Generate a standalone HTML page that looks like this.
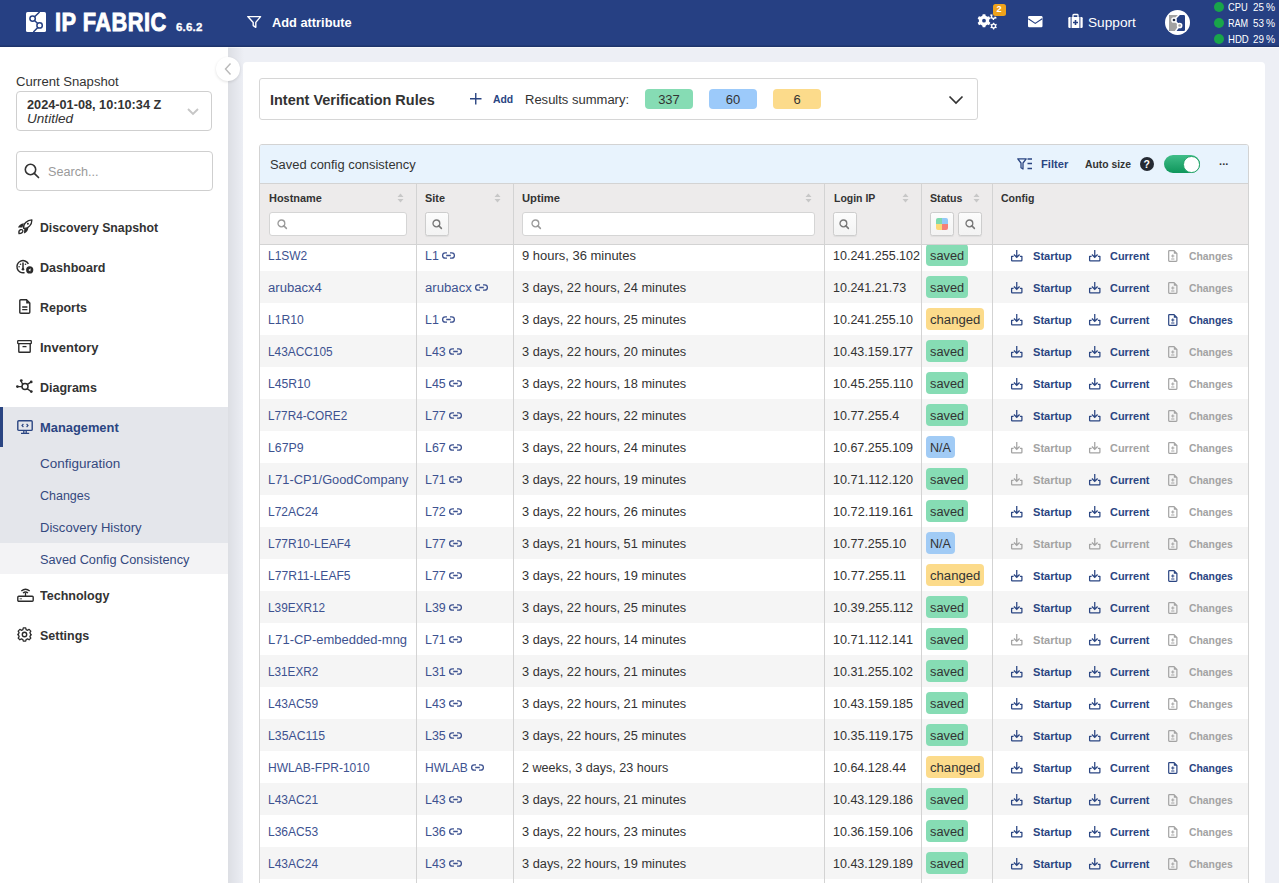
<!DOCTYPE html>
<html><head><meta charset="utf-8"><title>IP Fabric</title>
<style>
html,body{margin:0;padding:0;width:1279px;height:883px;overflow:hidden;background:#edeff5;font-family:"Liberation Sans", sans-serif}
.t{position:absolute;white-space:nowrap;font-family:"Liberation Sans", sans-serif;transform-origin:0 0}
.badge{position:absolute;border-radius:4px;font-family:"Liberation Sans", sans-serif;white-space:nowrap}
svg{overflow:visible}
</style></head><body>
<div style="position:absolute;left:0px;top:0px;width:1279px;height:883px;background:#edeff5"></div>
<div style="position:absolute;left:0px;top:47px;width:228px;height:836px;background:#fff"></div>
<div style="position:absolute;left:228px;top:47px;width:16px;height:836px;background:linear-gradient(90deg,rgba(0,0,0,0.07),rgba(0,0,0,0))"></div>
<div style="position:absolute;left:243px;top:62px;width:1022px;height:830px;background:#fff;border-radius:4px"></div>
<div style="position:absolute;left:0px;top:0px;width:1279px;height:47px;background:linear-gradient(180deg,#264083 0px,#264083 44.5px,#1c3166 47px)"></div>
<div style="position:absolute;left:228px;top:47px;width:1051px;height:1px;background:rgba(255,255,255,0.5)"></div>
<svg style="position:absolute;left:26px;top:12px;" width="20" height="20" viewBox="0 0 20 20"><rect x="0" y="0" width="20" height="20" rx="1.6" fill="#fff"/><g fill="none" stroke="#264083" stroke-width="1.5"><circle cx="6.6" cy="6.6" r="2.7"/><circle cx="13.6" cy="13.4" r="2.7"/><path d="M13.6 0 L8.6 4.8 M8.5 8.5 L11.7 11.5 M11.8 15.4 L7.4 20"/></g></svg>
<div class="t" style="left:54.8px;top:8.88px;font-size:26.6px;line-height:26.6px;color:#fff;font-weight:700;font-style:normal;transform:scaleX(0.82);transform-origin:0 0;letter-spacing:0.6px;-webkit-text-stroke:0.9px #fff">IP FABRIC</div>
<div class="t" style="left:176px;top:22.27px;font-size:11.5px;line-height:11.5px;color:#fff;font-weight:700;font-style:normal;letter-spacing:0.2px;-webkit-text-stroke:0.3px #fff">6.6.2</div>
<svg style="position:absolute;left:247px;top:15px;" width="15" height="13" viewBox="0 0 15 13"><path d="M0.8 1.6 H13.6 L8.8 7.4 V12.3 L6.2 10.6 V7.4 Z" fill="none" stroke="#fff" stroke-width="1.4" stroke-linejoin="round"/></svg>
<div class="t" style="left:272px;top:15.98px;font-size:13.02px;line-height:13.02px;color:#fff;font-weight:700;font-style:normal;transform:scaleX(0.9844);">Add attribute</div>
<svg style="position:absolute;left:972px;top:2px;" width="40" height="32" viewBox="0 0 40 32"><path d="M10.34 13.77 L10.68 12.13 L13.32 12.13 L13.66 13.77 L15.44 14.80 L17.03 14.27 L18.35 16.56 L17.10 17.67 L17.10 19.73 L18.35 20.84 L17.03 23.13 L15.44 22.60 L13.66 23.63 L13.32 25.27 L10.68 25.27 L10.34 23.63 L8.56 22.60 L6.97 23.13 L5.65 20.84 L6.90 19.73 L6.90 17.67 L5.65 16.56 L6.97 14.27 L8.56 14.80 Z M13.90 18.70 A1.9 1.9 0 1 0 10.10 18.70 A1.9 1.9 0 1 0 13.90 18.70 Z" fill="#fff" fill-rule="evenodd"/><path d="M20.84 21.61 L21.00 20.65 L22.20 20.65 L22.36 21.61 L23.37 22.20 L24.29 21.85 L24.89 22.90 L24.13 23.52 L24.13 24.68 L24.89 25.30 L24.29 26.35 L23.37 26.00 L22.36 26.59 L22.20 27.55 L21.00 27.55 L20.84 26.59 L19.83 26.00 L18.91 26.35 L18.31 25.30 L19.07 24.68 L19.07 23.52 L18.31 22.90 L18.91 21.85 L19.83 22.20 Z M22.85 24.10 A1.25 1.25 0 1 0 20.35 24.10 A1.25 1.25 0 1 0 22.85 24.10 Z" fill="#fff" fill-rule="evenodd"/><path d="M20.64 12.01 L20.80 11.05 L22.00 11.05 L22.16 12.01 L23.17 12.60 L24.09 12.25 L24.69 13.30 L23.93 13.92 L23.93 15.08 L24.69 15.70 L24.09 16.75 L23.17 16.40 L22.16 16.99 L22.00 17.95 L20.80 17.95 L20.64 16.99 L19.63 16.40 L18.71 16.75 L18.11 15.70 L18.87 15.08 L18.87 13.92 L18.11 13.30 L18.71 12.25 L19.63 12.60 Z M22.65 14.50 A1.25 1.25 0 1 0 20.15 14.50 A1.25 1.25 0 1 0 22.65 14.50 Z" fill="#fff" fill-rule="evenodd"/></svg>
<div style="position:absolute;left:993px;top:4px;width:13px;height:12px;background:#eda21b;border-radius:2.5px;box-shadow:0 0 0 0.8px #264083"></div>
<div class="t" style="left:996.6px;top:5.41px;font-size:9.2px;line-height:9.2px;color:#fff;font-weight:700;font-style:normal;">2</div>
<svg style="position:absolute;left:1027.7px;top:16px;" width="15" height="12" viewBox="0 0 15 12"><rect x="0" y="0" width="14.5" height="11.3" rx="1.2" fill="#fff"/><path d="M0.3 2.8 L7.25 7.4 L14.2 2.8" fill="none" stroke="#264083" stroke-width="1.1"/></svg>
<svg style="position:absolute;left:1068px;top:14px;" width="15" height="14" viewBox="0 0 15 14"><path d="M5 3 V1.3 Q5 0.5 5.8 0.5 H9.2 Q10 0.5 10 1.3 V3" fill="none" stroke="#fff" stroke-width="1.3"/><rect x="0.3" y="3" width="14.4" height="11" rx="1.2" fill="#fff"/><rect x="2.6" y="3" width="1" height="11" fill="#264083"/><rect x="11.4" y="3" width="1" height="11" fill="#264083"/><path d="M7.5 6 V11 M5 8.5 H10" stroke="#264083" stroke-width="1.6"/></svg>
<div class="t" style="left:1088px;top:15.98px;font-size:13.02px;line-height:13.02px;color:#fff;font-weight:400;font-style:normal;transform:scaleX(1.0487);">Support</div>
<svg style="position:absolute;left:1165px;top:10px;" width="25" height="25" viewBox="0 0 25 25"><circle cx="12.5" cy="12.5" r="12.5" fill="#fff"/><rect x="4" y="5" width="16" height="16" rx="1.2" fill="#264083"/><path d="M4 6.2 Q4 5 5.2 5 H13.6 L9 10 L14.6 15.5 L10.6 21 H5.2 Q4 21 4 19.8 Z" fill="#a2a2a2"/><path d="M14.6 4.2 L9 10 L14.6 15.5 L10.2 21.6" fill="none" stroke="#fff" stroke-width="1.5"/><circle cx="9" cy="10" r="2.1" fill="#222d45" stroke="#fff" stroke-width="1.5"/><circle cx="14.6" cy="15.5" r="2.1" fill="#a2a2a2" stroke="#fff" stroke-width="1.5"/></svg>
<div style="position:absolute;left:1214px;top:2px;width:10px;height:10px;background:#19a54a;border-radius:50%"></div>
<div class="t" style="left:1228px;top:3.34px;font-size:10.23px;line-height:10.23px;color:#fff;font-weight:400;font-style:normal;transform:scaleX(0.9088);">CPU</div>
<div class="t" style="left:1253px;top:3.34px;font-size:10.23px;line-height:10.23px;color:#fff;font-weight:400;font-style:normal;transform:scaleX(0.9615);">25</div>
<div class="t" style="left:1266px;top:3.34px;font-size:10.23px;line-height:10.23px;color:#fff;font-weight:400;font-style:normal;transform:scaleX(0.9983);">%</div>
<div style="position:absolute;left:1214px;top:18px;width:10px;height:10px;background:#19a54a;border-radius:50%"></div>
<div class="t" style="left:1228px;top:19.34px;font-size:10.23px;line-height:10.23px;color:#fff;font-weight:400;font-style:normal;transform:scaleX(0.8893);">RAM</div>
<div class="t" style="left:1253px;top:19.34px;font-size:10.23px;line-height:10.23px;color:#fff;font-weight:400;font-style:normal;transform:scaleX(0.9615);">53</div>
<div class="t" style="left:1266px;top:19.34px;font-size:10.23px;line-height:10.23px;color:#fff;font-weight:400;font-style:normal;transform:scaleX(0.9983);">%</div>
<div style="position:absolute;left:1214px;top:34px;width:10px;height:10px;background:#19a54a;border-radius:50%"></div>
<div class="t" style="left:1228px;top:35.34px;font-size:10.23px;line-height:10.23px;color:#fff;font-weight:400;font-style:normal;transform:scaleX(0.9351);">HDD</div>
<div class="t" style="left:1253px;top:35.34px;font-size:10.23px;line-height:10.23px;color:#fff;font-weight:400;font-style:normal;transform:scaleX(0.9615);">29</div>
<div class="t" style="left:1266px;top:35.34px;font-size:10.23px;line-height:10.23px;color:#fff;font-weight:400;font-style:normal;transform:scaleX(0.9983);">%</div>
<div class="t" style="left:16px;top:74.98px;font-size:13.02px;line-height:13.02px;color:#333333;font-weight:400;font-style:normal;transform:scaleX(1.0064);">Current Snapshot</div>
<div style="position:absolute;left:16px;top:91px;width:196px;height:40px;box-sizing:border-box;border:1px solid #cfcfcf;border-radius:4px;background:#fff"></div>
<div class="t" style="left:27px;top:97.98px;font-size:13.02px;line-height:13.02px;color:#333333;font-weight:700;font-style:normal;transform:scaleX(0.9767);">2024-01-08, 10:10:34 Z</div>
<div class="t" style="left:27px;top:111.98px;font-size:13.02px;line-height:13.02px;color:#333333;font-weight:400;font-style:italic;transform:scaleX(1.0432);">Untitled</div>
<svg style="position:absolute;left:187px;top:108px;" width="12" height="7" viewBox="0 0 12 7"><path d="M1 1 L6 6 L11 1" fill="none" stroke="#c6c6c6" stroke-width="1.9"/></svg>
<div style="position:absolute;left:16px;top:151px;width:197px;height:40px;box-sizing:border-box;border:1px solid #cfcfcf;border-radius:4px;background:#fff"></div>
<svg style="position:absolute;left:24px;top:163px;" width="16" height="16" viewBox="0 0 16 16"><circle cx="6.5" cy="6.5" r="5.2" fill="none" stroke="#333333" stroke-width="1.6"/><path d="M10.3 10.3 L14.5 14.5" stroke="#333333" stroke-width="1.7" stroke-linecap="round"/></svg>
<div class="t" style="left:47.5px;top:164.98px;font-size:13.02px;line-height:13.02px;color:#9a9a9a;font-weight:400;font-style:normal;transform:scaleX(0.9688);">Search...</div>
<div style="position:absolute;left:0px;top:407px;width:228px;height:136px;background:#e4e6eb"></div>
<div style="position:absolute;left:0px;top:407px;width:3px;height:40px;background:#2a4582"></div>
<div style="position:absolute;left:0px;top:543px;width:228px;height:31px;background:#f3f3f5"></div>
<div class="t" style="left:40.3px;top:220.98px;font-size:13.02px;line-height:13.02px;color:#333333;font-weight:700;font-style:normal;transform:scaleX(0.9439);">Discovery Snapshot</div>
<div class="t" style="left:40.3px;top:260.98px;font-size:13.02px;line-height:13.02px;color:#333333;font-weight:700;font-style:normal;transform:scaleX(0.9623);">Dashboard</div>
<div class="t" style="left:40.3px;top:300.98px;font-size:13.02px;line-height:13.02px;color:#333333;font-weight:700;font-style:normal;transform:scaleX(0.9555);">Reports</div>
<div class="t" style="left:40.3px;top:340.98px;font-size:13.02px;line-height:13.02px;color:#333333;font-weight:700;font-style:normal;transform:scaleX(0.9979);">Inventory</div>
<div class="t" style="left:40.3px;top:380.98px;font-size:13.02px;line-height:13.02px;color:#333333;font-weight:700;font-style:normal;transform:scaleX(0.9581);">Diagrams</div>
<div class="t" style="left:40.3px;top:420.98px;font-size:13.02px;line-height:13.02px;color:#2a4582;font-weight:700;font-style:normal;transform:scaleX(0.9888);">Management</div>
<div class="t" style="left:40.3px;top:588.98px;font-size:13.02px;line-height:13.02px;color:#333333;font-weight:700;font-style:normal;transform:scaleX(0.9627);">Technology</div>
<div class="t" style="left:40.3px;top:628.98px;font-size:13.02px;line-height:13.02px;color:#333333;font-weight:700;font-style:normal;transform:scaleX(0.9589);">Settings</div>
<div class="t" style="left:39.8px;top:457.28px;font-size:13.02px;line-height:13.02px;color:#34497f;font-weight:400;font-style:normal;transform:scaleX(1.0367);">Configuration</div>
<div class="t" style="left:39.8px;top:489.28px;font-size:13.02px;line-height:13.02px;color:#34497f;font-weight:400;font-style:normal;transform:scaleX(0.9595);">Changes</div>
<div class="t" style="left:39.8px;top:521.28px;font-size:13.02px;line-height:13.02px;color:#34497f;font-weight:400;font-style:normal;transform:scaleX(1.0031);">Discovery History</div>
<div class="t" style="left:39.8px;top:553.28px;font-size:13.02px;line-height:13.02px;color:#34497f;font-weight:400;font-style:normal;transform:scaleX(0.9790);">Saved Config Consistency</div>
<svg style="position:absolute;left:17px;top:219px;" width="16" height="16" viewBox="0 0 16 16"><path d="M1 8.6 Q2.2 4.9 6.9 4.2 L5.4 8.6 Z" fill="#2b2b2b"/><path d="M7 14.6 L7.3 9.6 L11.4 7.9 Q11.4 12.8 7 14.6 Z" fill="#2b2b2b"/><path d="M6.6 9.4 C5.8 4.8 10.2 1.2 14.9 0.9 C14.9 5.6 11.3 10 6.6 9.4 Z" fill="#fff" stroke="#2b2b2b" stroke-width="1.3" stroke-linejoin="round"/><circle cx="10.9" cy="4.7" r="1" fill="#2b2b2b"/><path d="M2 14.6 Q1.3 11.5 3.6 10.6 Q5.6 10.2 5.9 12 Q5.9 14.3 2 14.6 Z" fill="none" stroke="#2b2b2b" stroke-width="1.3"/></svg>
<svg style="position:absolute;left:16px;top:259px;" width="18" height="16" viewBox="0 0 18 16"><path d="M12.4 4.8 A6.1 6.1 0 1 0 8.6 13.6" fill="none" stroke="#2b2b2b" stroke-width="1.5"/><path d="M7 3.6 V10" stroke="#2b2b2b" stroke-width="1.5"/><circle cx="7" cy="10.3" r="1.3" fill="#2b2b2b"/><circle cx="4.5" cy="5.2" r="0.8" fill="#2b2b2b"/><circle cx="9.5" cy="5.2" r="0.8" fill="#2b2b2b"/><circle cx="3.1" cy="7.7" r="0.8" fill="#2b2b2b"/><circle cx="13.7" cy="10.9" r="3.6" fill="#2b2b2b"/><path d="M12.4 10.9 L14.8 9.3 L14.3 12.4 Z" fill="#fff"/></svg>
<svg style="position:absolute;left:19px;top:299px;" width="12" height="15" viewBox="0 0 12 15"><path d="M1.8 0.8 H7.5 L10.8 4.1 V13.2 Q10.8 14.2 9.8 14.2 H1.8 Q0.8 14.2 0.8 13.2 V1.8 Q0.8 0.8 1.8 0.8 Z" fill="none" stroke="#2b2b2b" stroke-width="1.4"/><path d="M7.2 0.8 L10.8 4.4 L7.2 4.4 Z" fill="#2b2b2b"/><path d="M3.2 8 H8.4 M3.2 10.6 H8.4" stroke="#2b2b2b" stroke-width="1.3"/></svg>
<svg style="position:absolute;left:17px;top:340px;" width="15" height="13" viewBox="0 0 15 13"><rect x="0.7" y="0.7" width="13.6" height="3" rx="0.6" fill="none" stroke="#2b2b2b" stroke-width="1.3"/><path d="M1.8 3.7 V11.5 Q1.8 12.3 2.6 12.3 H12.4 Q13.2 12.3 13.2 11.5 V3.7" fill="none" stroke="#2b2b2b" stroke-width="1.4"/><path d="M5.5 6.6 H9.5" stroke="#2b2b2b" stroke-width="1.3"/></svg>
<svg style="position:absolute;left:16px;top:379px;" width="18" height="15" viewBox="0 0 18 15"><circle cx="9" cy="7.6" r="3" fill="none" stroke="#2b2b2b" stroke-width="1.5"/><path d="M1 7.6 H6 M6.8 5.5 L5 2 M11 5.6 L14.5 3.3 M11 9.6 L14.5 12" stroke="#2b2b2b" stroke-width="1.4"/><circle cx="1.4" cy="7.6" r="1.4" fill="#2b2b2b"/><circle cx="5.3" cy="1.6" r="1.4" fill="#2b2b2b"/><circle cx="15.2" cy="2.9" r="1.4" fill="#2b2b2b"/><circle cx="15.3" cy="12.6" r="1.4" fill="#2b2b2b"/></svg>
<svg style="position:absolute;left:17px;top:420px;" width="16" height="14" viewBox="0 0 16 14"><rect x="0.8" y="0.8" width="14.4" height="9.6" rx="1" fill="none" stroke="#2a4582" stroke-width="1.4"/><path d="M4 13.3 H12.2 M6.8 10.4 V13.3 M9.2 10.4 V13.3" stroke="#2a4582" stroke-width="1.3"/><path d="M6.4 4 L5 5.5 L6.4 7 M9.6 4 L11 5.5 L9.6 7" fill="none" stroke="#2a4582" stroke-width="1.1"/></svg>
<svg style="position:absolute;left:17px;top:588px;" width="17" height="14" viewBox="0 0 17 14"><rect x="0.8" y="8.3" width="15.4" height="5" rx="1" fill="none" stroke="#2b2b2b" stroke-width="1.4"/><path d="M8.5 5 V8.3" stroke="#2b2b2b" stroke-width="1.3"/><path d="M4.3 3 Q8.5 -0.5 12.7 3 M6 5 Q8.5 3 11 5" fill="none" stroke="#2b2b2b" stroke-width="1.3"/><path d="M2.6 10.8 H5" stroke="#2b2b2b" stroke-width="0.8"/></svg>
<svg style="position:absolute;left:17px;top:627px;" width="15" height="15" viewBox="0 0 15 15"><path d="M6.3 0.9 H8.7 L9.1 2.6 L10.6 3.3 L12.1 2.4 L13.8 4.1 L12.9 5.6 L13.5 7.1 L14.2 7.5 V8 L13.5 8.4 L12.9 9.6 L13.8 11.1 L12.1 12.8 L10.6 11.9 L9.1 12.6 L8.7 14.2 H6.3 L5.9 12.6 L4.4 11.9 L2.9 12.8 L1.2 11.1 L2.1 9.6 L1.5 8.1 L0.8 7.6 V7.3 L1.5 6.9 L2.1 5.6 L1.2 4.1 L2.9 2.4 L4.4 3.3 L5.9 2.6 Z" fill="none" stroke="#2b2b2b" stroke-width="1.3" stroke-linejoin="round"/><circle cx="7.5" cy="7.5" r="2.2" fill="none" stroke="#2b2b2b" stroke-width="1.4"/></svg>
<div style="position:absolute;left:216px;top:57px;width:24px;height:24px;border-radius:50%;background:#fff;box-shadow:0 1px 3px rgba(0,0,0,0.12)"></div>
<svg style="position:absolute;left:223px;top:62px;" width="10" height="14" viewBox="0 0 10 14"><path d="M7.5 1.5 L2.5 7 L7.5 12.5" fill="none" stroke="#b9b9b9" stroke-width="1.4"/></svg>
<div style="position:absolute;left:259px;top:78px;width:719px;height:42px;box-sizing:border-box;border:1px solid #d6d6d6;border-radius:3px;background:#fff"></div>
<div class="t" style="left:270px;top:93.40px;font-size:14.88px;line-height:14.88px;color:#333333;font-weight:700;font-style:normal;transform:scaleX(0.9722);">Intent Verification Rules</div>
<svg style="position:absolute;left:470px;top:93px;" width="12" height="12" viewBox="0 0 12 12"><path d="M5.75 0 V11.5 M0 5.75 H11.5" stroke="#2a4582" stroke-width="1.4"/></svg>
<div class="t" style="left:492.5px;top:93.75px;font-size:11.16px;line-height:11.16px;color:#2a4582;font-weight:700;font-style:normal;transform:scaleX(0.9330);">Add</div>
<div class="t" style="left:525px;top:92.88px;font-size:13.02px;line-height:13.02px;color:#333333;font-weight:400;font-style:normal;transform:scaleX(0.9992);">Results summary:</div>
<div class="badge" style="left:645px;top:89px;width:48px;height:20px;background:#86dcb4;line-height:21.5px;font-size:13px;text-align:center;color:#333333">337</div>
<div class="badge" style="left:709px;top:89px;width:48px;height:20px;background:#9ccafa;line-height:21.5px;font-size:13px;text-align:center;color:#333333">60</div>
<div class="badge" style="left:773px;top:89px;width:48px;height:20px;background:#fcdb8b;line-height:21.5px;font-size:13px;text-align:center;color:#333333">6</div>
<svg style="position:absolute;left:948px;top:95px;" width="16" height="10" viewBox="0 0 16 10"><path d="M1.5 1.5 L8 8 L14.5 1.5" fill="none" stroke="#333333" stroke-width="1.7"/></svg>
<div style="position:absolute;left:259px;top:144px;width:990px;height:760px;box-sizing:border-box;border:1px solid #d3d3d3;border-radius:3px 3px 0 0;background:#fff"></div>
<div style="position:absolute;left:260px;top:145px;width:988px;height:38px;background:#e8f3fd;border-radius:2px 2px 0 0"></div>
<div style="position:absolute;left:260px;top:183px;width:988px;height:1px;background:#d3d3d3"></div>
<div class="t" style="left:270px;top:157.78px;font-size:13.02px;line-height:13.02px;color:#333333;font-weight:400;font-style:normal;transform:scaleX(0.9916);">Saved config consistency</div>
<svg style="position:absolute;left:1017px;top:158px;" width="16" height="12" viewBox="0 0 16 12"><path d="M0.8 0.8 H9.2 L6 5 V11 L4 9.8 V5 Z" fill="none" stroke="#2a4582" stroke-width="1.3" stroke-linejoin="round"/><path d="M10.5 1 H15 M10.5 5.5 H15 M10.5 10.5 H15" stroke="#2a4582" stroke-width="1.3"/></svg>
<div class="t" style="left:1041.4px;top:158.55px;font-size:11.16px;line-height:11.16px;color:#2a4582;font-weight:700;font-style:normal;transform:scaleX(0.9977);">Filter</div>
<div class="t" style="left:1084.6px;top:158.55px;font-size:11.16px;line-height:11.16px;color:#333333;font-weight:700;font-style:normal;transform:scaleX(0.9285);">Auto size</div>
<div style="position:absolute;left:1140px;top:157px;width:14px;height:14px;background:#252a33;border-radius:50%"></div>
<div class="t" style="left:1143.6px;top:159.11px;font-size:10.5px;line-height:10.5px;color:#fff;font-weight:700;font-style:normal;">?</div>
<div style="position:absolute;left:1164px;top:155px;width:36px;height:18px;background:linear-gradient(180deg,#40bd88,#0f965b);border-radius:9px"></div>
<div style="position:absolute;left:1183px;top:156px;width:16.5px;height:16.5px;box-sizing:border-box;border:1px solid #23a468;background:#fff;border-radius:50%"></div>
<div class="t" style="left:1219px;top:158.69px;font-size:11px;line-height:11px;color:#333333;font-weight:700;font-style:normal;letter-spacing:-0.5px">&middot;&middot;&middot;</div>
<div style="position:absolute;left:260px;top:184px;width:988px;height:60px;background:#edebeb"></div>
<div style="position:absolute;left:260px;top:244px;width:988px;height:1px;background:#d3d3d3"></div>
<div class="t" style="left:268.6px;top:192.85px;font-size:11.16px;line-height:11.16px;color:#333;font-weight:700;font-style:normal;transform:scaleX(0.9806);">Hostname</div>
<svg style="position:absolute;left:397px;top:193px;" width="7" height="10" viewBox="0 0 7 10"><path d="M3.5 0.5 L6.5 4 H0.5 Z M3.5 9.5 L6.5 6 H0.5 Z" fill="#c7c7c7"/></svg>
<div class="t" style="left:425.1px;top:192.85px;font-size:11.16px;line-height:11.16px;color:#333;font-weight:700;font-style:normal;transform:scaleX(0.9733);">Site</div>
<svg style="position:absolute;left:494px;top:193px;" width="7" height="10" viewBox="0 0 7 10"><path d="M3.5 0.5 L6.5 4 H0.5 Z M3.5 9.5 L6.5 6 H0.5 Z" fill="#c7c7c7"/></svg>
<div class="t" style="left:521.9px;top:192.85px;font-size:11.16px;line-height:11.16px;color:#333;font-weight:700;font-style:normal;transform:scaleX(1.0062);">Uptime</div>
<svg style="position:absolute;left:805px;top:193px;" width="7" height="10" viewBox="0 0 7 10"><path d="M3.5 0.5 L6.5 4 H0.5 Z M3.5 9.5 L6.5 6 H0.5 Z" fill="#c7c7c7"/></svg>
<div class="t" style="left:833.5px;top:192.85px;font-size:11.16px;line-height:11.16px;color:#333;font-weight:700;font-style:normal;transform:scaleX(0.9396);">Login IP</div>
<svg style="position:absolute;left:902px;top:193px;" width="7" height="10" viewBox="0 0 7 10"><path d="M3.5 0.5 L6.5 4 H0.5 Z M3.5 9.5 L6.5 6 H0.5 Z" fill="#c7c7c7"/></svg>
<div class="t" style="left:930.2px;top:192.85px;font-size:11.16px;line-height:11.16px;color:#333;font-weight:700;font-style:normal;transform:scaleX(0.9528);">Status</div>
<svg style="position:absolute;left:973px;top:193px;" width="7" height="10" viewBox="0 0 7 10"><path d="M3.5 0.5 L6.5 4 H0.5 Z M3.5 9.5 L6.5 6 H0.5 Z" fill="#c7c7c7"/></svg>
<div class="t" style="left:1001.0px;top:192.85px;font-size:11.16px;line-height:11.16px;color:#333;font-weight:700;font-style:normal;transform:scaleX(0.9460);">Config</div>
<div style="position:absolute;left:416.0px;top:184px;width:1px;height:720px;background:#d3d3d3"></div>
<div style="position:absolute;left:512.8px;top:184px;width:1px;height:720px;background:#d3d3d3"></div>
<div style="position:absolute;left:824.4px;top:184px;width:1px;height:720px;background:#d3d3d3"></div>
<div style="position:absolute;left:921.1px;top:184px;width:1px;height:720px;background:#d3d3d3"></div>
<div style="position:absolute;left:991.9px;top:184px;width:1px;height:720px;background:#d3d3d3"></div>
<div style="position:absolute;left:268.6px;top:212px;width:138.5px;height:23.5px;box-sizing:border-box;border:1px solid #d5d5d5;border-radius:3px;background:#fff"></div>
<svg style="position:absolute;left:277.1px;top:218.5px;" width="11" height="11" viewBox="0 0 11 11"><circle cx="4.4" cy="4.4" r="3.4" fill="none" stroke="#9a9a9a" stroke-width="1.3"/><path d="M6.9 6.9 L9.4 9.4" stroke="#9a9a9a" stroke-width="1.5" stroke-linecap="round"/></svg>
<div style="position:absolute;left:425.3px;top:212px;width:23.5px;height:23.5px;box-sizing:border-box;border:1px solid #cdcdcd;border-radius:2.5px;background:linear-gradient(180deg,#fcfcfc,#f3f3f3);box-shadow:0 1px 1px rgba(0,0,0,0.06)"></div>
<svg style="position:absolute;left:431.5px;top:218.5px;" width="11" height="11" viewBox="0 0 11 11"><circle cx="4.4" cy="4.4" r="3.4" fill="none" stroke="#777" stroke-width="1.3"/><path d="M6.9 6.9 L9.4 9.4" stroke="#777" stroke-width="1.5" stroke-linecap="round"/></svg>
<div style="position:absolute;left:522.2px;top:212px;width:293.0px;height:23.5px;box-sizing:border-box;border:1px solid #d5d5d5;border-radius:3px;background:#fff"></div>
<svg style="position:absolute;left:530.7px;top:218.5px;" width="11" height="11" viewBox="0 0 11 11"><circle cx="4.4" cy="4.4" r="3.4" fill="none" stroke="#9a9a9a" stroke-width="1.3"/><path d="M6.9 6.9 L9.4 9.4" stroke="#9a9a9a" stroke-width="1.5" stroke-linecap="round"/></svg>
<div style="position:absolute;left:833.2px;top:212px;width:23.5px;height:23.5px;box-sizing:border-box;border:1px solid #cdcdcd;border-radius:2.5px;background:linear-gradient(180deg,#fcfcfc,#f3f3f3);box-shadow:0 1px 1px rgba(0,0,0,0.06)"></div>
<svg style="position:absolute;left:839.4px;top:218.5px;" width="11" height="11" viewBox="0 0 11 11"><circle cx="4.4" cy="4.4" r="3.4" fill="none" stroke="#777" stroke-width="1.3"/><path d="M6.9 6.9 L9.4 9.4" stroke="#777" stroke-width="1.5" stroke-linecap="round"/></svg>
<div style="position:absolute;left:930.4px;top:212px;width:23.5px;height:23.5px;box-sizing:border-box;border:1px solid #cdcdcd;border-radius:2.5px;background:linear-gradient(180deg,#fcfcfc,#f3f3f3);box-shadow:0 1px 1px rgba(0,0,0,0.06)"></div>
<svg style="position:absolute;left:936px;top:218px;" width="12" height="12" viewBox="0 0 12 12"><clipPath id="cq"><rect x="0" y="0" width="12" height="12" rx="2"/></clipPath><g clip-path="url(#cq)"><rect x="0" y="0" width="6" height="6" fill="#7fd9ad"/><rect x="6" y="0" width="6" height="6" fill="#93c9f7"/><rect x="0" y="6" width="6" height="6" fill="#fbd977"/><rect x="6" y="6" width="6" height="6" fill="#f58079"/></g></svg>
<div style="position:absolute;left:958.4px;top:212px;width:23.5px;height:23.5px;box-sizing:border-box;border:1px solid #cdcdcd;border-radius:2.5px;background:linear-gradient(180deg,#fcfcfc,#f3f3f3);box-shadow:0 1px 1px rgba(0,0,0,0.06)"></div>
<svg style="position:absolute;left:964.6px;top:218.5px;" width="11" height="11" viewBox="0 0 11 11"><circle cx="4.4" cy="4.4" r="3.4" fill="none" stroke="#777" stroke-width="1.3"/><path d="M6.9 6.9 L9.4 9.4" stroke="#777" stroke-width="1.5" stroke-linecap="round"/></svg>
<div style="position:absolute;left:0;top:245px;width:1279px;height:638px;overflow:hidden">
<div style="position:absolute;left:260px;top:-6px;width:988px;height:32px;background:#fff"></div>
<div style="position:absolute;left:416.0px;top:-6px;width:1px;height:32px;background:#d3d3d3"></div>
<div style="position:absolute;left:512.8px;top:-6px;width:1px;height:32px;background:#d3d3d3"></div>
<div style="position:absolute;left:824.4px;top:-6px;width:1px;height:32px;background:#d3d3d3"></div>
<div style="position:absolute;left:921.1px;top:-6px;width:1px;height:32px;background:#d3d3d3"></div>
<div style="position:absolute;left:991.9px;top:-6px;width:1px;height:32px;background:#d3d3d3"></div>
<div class="t" style="left:268.2px;top:4.28px;font-size:13.02px;line-height:13.02px;color:#3d5290;font-weight:400;font-style:normal;transform:scaleX(0.9184);">L1SW2</div>
<div class="t" style="left:425.2px;top:4.28px;font-size:13.02px;line-height:13.02px;color:#3d5290;font-weight:400;font-style:normal;transform:scaleX(0.9504);">L1</div>
<svg style="position:absolute;left:calc(428.3px + 13.77px);top:7px" width="13" height="7" viewBox="0 0 13 7"><path d="M5 0.8 H3.3 A2.7 2.7 0 0 0 3.3 6.2 H5 M8 0.8 H9.7 A2.7 2.7 0 0 1 9.7 6.2 H8 M4.2 3.5 H8.8" fill="none" stroke="#3d5290" stroke-width="1.3"/></svg>
<div class="t" style="left:522.2px;top:4.28px;font-size:13.02px;line-height:13.02px;color:#333333;font-weight:400;font-style:normal;transform:scaleX(0.9966);">9 hours, 36 minutes</div>
<div class="t" style="left:833.2px;top:4.28px;font-size:13.02px;line-height:13.02px;color:#333333;font-weight:400;font-style:normal;transform:scaleX(0.9615);">10.241.255.102</div>
<div class="badge" style="left:926px;top:-1px;height:22px;width:calc(34.12px + 7.5px);background:#86dcb4"></div>
<div class="t" style="left:930.2px;top:4.28px;font-size:13.02px;line-height:13.02px;color:#333333;font-weight:400;font-style:normal;transform:scaleX(0.9825);">saved</div>
<svg style="position:absolute;left:1010.5px;top:5px;" width="12" height="12" viewBox="0 0 12 12"><path d="M5.75 0 V7.3 M2.9 4.5 L5.75 7.3 L8.6 4.5" fill="none" stroke="#2a4582" stroke-width="1.25"/><path d="M2.6 6.3 H0.6 V10.2 Q0.6 10.9 1.3 10.9 H10.2 Q10.9 10.9 10.9 10.2 V6.3 H8.9" fill="none" stroke="#2a4582" stroke-width="1.25" stroke-linejoin="round"/></svg>
<div class="t" style="left:1032.7px;top:5.85px;font-size:11.16px;line-height:11.16px;color:#2a4582;font-weight:700;font-style:normal;transform:scaleX(0.9928);">Startup</div>
<svg style="position:absolute;left:1088.5px;top:5px;" width="12" height="12" viewBox="0 0 12 12"><path d="M5.75 0 V7.3 M2.9 4.5 L5.75 7.3 L8.6 4.5" fill="none" stroke="#2a4582" stroke-width="1.25"/><path d="M2.6 6.3 H0.6 V10.2 Q0.6 10.9 1.3 10.9 H10.2 Q10.9 10.9 10.9 10.2 V6.3 H8.9" fill="none" stroke="#2a4582" stroke-width="1.25" stroke-linejoin="round"/></svg>
<div class="t" style="left:1110.3px;top:5.85px;font-size:11.16px;line-height:11.16px;color:#2a4582;font-weight:700;font-style:normal;transform:scaleX(0.9787);">Current</div>
<svg style="position:absolute;left:1167.7px;top:4.8px;" width="10" height="12" viewBox="0 0 10 12"><path d="M1.4 0.6 H6 L8.9 3.5 V10.6 Q8.9 11.3 8.2 11.3 H1.4 Q0.7 11.3 0.7 10.6 V1.3 Q0.7 0.6 1.4 0.6 Z" fill="none" stroke="#a3a3a3" stroke-width="1.2"/><path d="M5.8 0.6 L8.9 3.7 H5.8 Z" fill="#a3a3a3"/><path d="M4.8 4.4 V7.6 M3.2 6 H6.4 M3.2 9 H6.4" stroke="#a3a3a3" stroke-width="1"/></svg>
<div class="t" style="left:1188.7px;top:5.85px;font-size:11.16px;line-height:11.16px;color:#a3a3a3;font-weight:700;font-style:normal;transform:scaleX(0.9300);">Changes</div>
<!--site:L1:10-->
<div style="position:absolute;left:260px;top:26px;width:988px;height:32px;background:#f5f5f5"></div>
<div style="position:absolute;left:416.0px;top:26px;width:1px;height:32px;background:#d3d3d3"></div>
<div style="position:absolute;left:512.8px;top:26px;width:1px;height:32px;background:#d3d3d3"></div>
<div style="position:absolute;left:824.4px;top:26px;width:1px;height:32px;background:#d3d3d3"></div>
<div style="position:absolute;left:921.1px;top:26px;width:1px;height:32px;background:#d3d3d3"></div>
<div style="position:absolute;left:991.9px;top:26px;width:1px;height:32px;background:#d3d3d3"></div>
<div class="t" style="left:268.2px;top:36.28px;font-size:13.02px;line-height:13.02px;color:#3d5290;font-weight:400;font-style:normal;transform:scaleX(1.0055);">arubacx4</div>
<div class="t" style="left:425.2px;top:36.28px;font-size:13.02px;line-height:13.02px;color:#3d5290;font-weight:400;font-style:normal;transform:scaleX(1.0121);">arubacx</div>
<svg style="position:absolute;left:calc(428.3px + 46.88px);top:39px" width="13" height="7" viewBox="0 0 13 7"><path d="M5 0.8 H3.3 A2.7 2.7 0 0 0 3.3 6.2 H5 M8 0.8 H9.7 A2.7 2.7 0 0 1 9.7 6.2 H8 M4.2 3.5 H8.8" fill="none" stroke="#3d5290" stroke-width="1.3"/></svg>
<div class="t" style="left:522.2px;top:36.28px;font-size:13.02px;line-height:13.02px;color:#333333;font-weight:400;font-style:normal;transform:scaleX(0.9822);">3 days, 22 hours, 24 minutes</div>
<div class="t" style="left:833.2px;top:36.28px;font-size:13.02px;line-height:13.02px;color:#333333;font-weight:400;font-style:normal;transform:scaleX(0.9618);">10.241.21.73</div>
<div class="badge" style="left:926px;top:31px;height:22px;width:calc(34.12px + 7.5px);background:#86dcb4"></div>
<div class="t" style="left:930.2px;top:36.28px;font-size:13.02px;line-height:13.02px;color:#333333;font-weight:400;font-style:normal;transform:scaleX(0.9825);">saved</div>
<svg style="position:absolute;left:1010.5px;top:37px;" width="12" height="12" viewBox="0 0 12 12"><path d="M5.75 0 V7.3 M2.9 4.5 L5.75 7.3 L8.6 4.5" fill="none" stroke="#2a4582" stroke-width="1.25"/><path d="M2.6 6.3 H0.6 V10.2 Q0.6 10.9 1.3 10.9 H10.2 Q10.9 10.9 10.9 10.2 V6.3 H8.9" fill="none" stroke="#2a4582" stroke-width="1.25" stroke-linejoin="round"/></svg>
<div class="t" style="left:1032.7px;top:37.85px;font-size:11.16px;line-height:11.16px;color:#2a4582;font-weight:700;font-style:normal;transform:scaleX(0.9928);">Startup</div>
<svg style="position:absolute;left:1088.5px;top:37px;" width="12" height="12" viewBox="0 0 12 12"><path d="M5.75 0 V7.3 M2.9 4.5 L5.75 7.3 L8.6 4.5" fill="none" stroke="#2a4582" stroke-width="1.25"/><path d="M2.6 6.3 H0.6 V10.2 Q0.6 10.9 1.3 10.9 H10.2 Q10.9 10.9 10.9 10.2 V6.3 H8.9" fill="none" stroke="#2a4582" stroke-width="1.25" stroke-linejoin="round"/></svg>
<div class="t" style="left:1110.3px;top:37.85px;font-size:11.16px;line-height:11.16px;color:#2a4582;font-weight:700;font-style:normal;transform:scaleX(0.9787);">Current</div>
<svg style="position:absolute;left:1167.7px;top:36.8px;" width="10" height="12" viewBox="0 0 10 12"><path d="M1.4 0.6 H6 L8.9 3.5 V10.6 Q8.9 11.3 8.2 11.3 H1.4 Q0.7 11.3 0.7 10.6 V1.3 Q0.7 0.6 1.4 0.6 Z" fill="none" stroke="#a3a3a3" stroke-width="1.2"/><path d="M5.8 0.6 L8.9 3.7 H5.8 Z" fill="#a3a3a3"/><path d="M4.8 4.4 V7.6 M3.2 6 H6.4 M3.2 9 H6.4" stroke="#a3a3a3" stroke-width="1"/></svg>
<div class="t" style="left:1188.7px;top:37.85px;font-size:11.16px;line-height:11.16px;color:#a3a3a3;font-weight:700;font-style:normal;transform:scaleX(0.9300);">Changes</div>
<!--site:arubacx:42-->
<div style="position:absolute;left:260px;top:58px;width:988px;height:32px;background:#fff"></div>
<div style="position:absolute;left:416.0px;top:58px;width:1px;height:32px;background:#d3d3d3"></div>
<div style="position:absolute;left:512.8px;top:58px;width:1px;height:32px;background:#d3d3d3"></div>
<div style="position:absolute;left:824.4px;top:58px;width:1px;height:32px;background:#d3d3d3"></div>
<div style="position:absolute;left:921.1px;top:58px;width:1px;height:32px;background:#d3d3d3"></div>
<div style="position:absolute;left:991.9px;top:58px;width:1px;height:32px;background:#d3d3d3"></div>
<div class="t" style="left:268.2px;top:68.28px;font-size:13.02px;line-height:13.02px;color:#3d5290;font-weight:400;font-style:normal;transform:scaleX(0.9295);">L1R10</div>
<div class="t" style="left:425.2px;top:68.28px;font-size:13.02px;line-height:13.02px;color:#3d5290;font-weight:400;font-style:normal;transform:scaleX(0.9504);">L1</div>
<svg style="position:absolute;left:calc(428.3px + 13.77px);top:71px" width="13" height="7" viewBox="0 0 13 7"><path d="M5 0.8 H3.3 A2.7 2.7 0 0 0 3.3 6.2 H5 M8 0.8 H9.7 A2.7 2.7 0 0 1 9.7 6.2 H8 M4.2 3.5 H8.8" fill="none" stroke="#3d5290" stroke-width="1.3"/></svg>
<div class="t" style="left:522.2px;top:68.28px;font-size:13.02px;line-height:13.02px;color:#333333;font-weight:400;font-style:normal;transform:scaleX(0.9822);">3 days, 22 hours, 25 minutes</div>
<div class="t" style="left:833.2px;top:68.28px;font-size:13.02px;line-height:13.02px;color:#333333;font-weight:400;font-style:normal;transform:scaleX(0.9615);">10.241.255.10</div>
<div class="badge" style="left:926px;top:63px;height:22px;width:calc(50.30px + 7.5px);background:#fcdb8b"></div>
<div class="t" style="left:930.2px;top:68.28px;font-size:13.02px;line-height:13.02px;color:#333333;font-weight:400;font-style:normal;transform:scaleX(1.0069);">changed</div>
<svg style="position:absolute;left:1010.5px;top:69px;" width="12" height="12" viewBox="0 0 12 12"><path d="M5.75 0 V7.3 M2.9 4.5 L5.75 7.3 L8.6 4.5" fill="none" stroke="#2a4582" stroke-width="1.25"/><path d="M2.6 6.3 H0.6 V10.2 Q0.6 10.9 1.3 10.9 H10.2 Q10.9 10.9 10.9 10.2 V6.3 H8.9" fill="none" stroke="#2a4582" stroke-width="1.25" stroke-linejoin="round"/></svg>
<div class="t" style="left:1032.7px;top:69.85px;font-size:11.16px;line-height:11.16px;color:#2a4582;font-weight:700;font-style:normal;transform:scaleX(0.9928);">Startup</div>
<svg style="position:absolute;left:1088.5px;top:69px;" width="12" height="12" viewBox="0 0 12 12"><path d="M5.75 0 V7.3 M2.9 4.5 L5.75 7.3 L8.6 4.5" fill="none" stroke="#2a4582" stroke-width="1.25"/><path d="M2.6 6.3 H0.6 V10.2 Q0.6 10.9 1.3 10.9 H10.2 Q10.9 10.9 10.9 10.2 V6.3 H8.9" fill="none" stroke="#2a4582" stroke-width="1.25" stroke-linejoin="round"/></svg>
<div class="t" style="left:1110.3px;top:69.85px;font-size:11.16px;line-height:11.16px;color:#2a4582;font-weight:700;font-style:normal;transform:scaleX(0.9787);">Current</div>
<svg style="position:absolute;left:1167.7px;top:68.8px;" width="10" height="12" viewBox="0 0 10 12"><path d="M1.4 0.6 H6 L8.9 3.5 V10.6 Q8.9 11.3 8.2 11.3 H1.4 Q0.7 11.3 0.7 10.6 V1.3 Q0.7 0.6 1.4 0.6 Z" fill="none" stroke="#2a4582" stroke-width="1.2"/><path d="M5.8 0.6 L8.9 3.7 H5.8 Z" fill="#2a4582"/><path d="M4.8 4.4 V7.6 M3.2 6 H6.4 M3.2 9 H6.4" stroke="#2a4582" stroke-width="1"/></svg>
<div class="t" style="left:1188.7px;top:69.85px;font-size:11.16px;line-height:11.16px;color:#2a4582;font-weight:700;font-style:normal;transform:scaleX(0.9300);">Changes</div>
<!--site:L1:74-->
<div style="position:absolute;left:260px;top:90px;width:988px;height:32px;background:#f5f5f5"></div>
<div style="position:absolute;left:416.0px;top:90px;width:1px;height:32px;background:#d3d3d3"></div>
<div style="position:absolute;left:512.8px;top:90px;width:1px;height:32px;background:#d3d3d3"></div>
<div style="position:absolute;left:824.4px;top:90px;width:1px;height:32px;background:#d3d3d3"></div>
<div style="position:absolute;left:921.1px;top:90px;width:1px;height:32px;background:#d3d3d3"></div>
<div style="position:absolute;left:991.9px;top:90px;width:1px;height:32px;background:#d3d3d3"></div>
<div class="t" style="left:268.2px;top:100.28px;font-size:13.02px;line-height:13.02px;color:#3d5290;font-weight:400;font-style:normal;transform:scaleX(0.9117);">L43ACC105</div>
<div class="t" style="left:425.2px;top:100.28px;font-size:13.02px;line-height:13.02px;color:#3d5290;font-weight:400;font-style:normal;transform:scaleX(0.9547);">L43</div>
<svg style="position:absolute;left:calc(428.3px + 20.73px);top:103px" width="13" height="7" viewBox="0 0 13 7"><path d="M5 0.8 H3.3 A2.7 2.7 0 0 0 3.3 6.2 H5 M8 0.8 H9.7 A2.7 2.7 0 0 1 9.7 6.2 H8 M4.2 3.5 H8.8" fill="none" stroke="#3d5290" stroke-width="1.3"/></svg>
<div class="t" style="left:522.2px;top:100.28px;font-size:13.02px;line-height:13.02px;color:#333333;font-weight:400;font-style:normal;transform:scaleX(0.9822);">3 days, 22 hours, 20 minutes</div>
<div class="t" style="left:833.2px;top:100.28px;font-size:13.02px;line-height:13.02px;color:#333333;font-weight:400;font-style:normal;transform:scaleX(0.9615);">10.43.159.177</div>
<div class="badge" style="left:926px;top:95px;height:22px;width:calc(34.12px + 7.5px);background:#86dcb4"></div>
<div class="t" style="left:930.2px;top:100.28px;font-size:13.02px;line-height:13.02px;color:#333333;font-weight:400;font-style:normal;transform:scaleX(0.9825);">saved</div>
<svg style="position:absolute;left:1010.5px;top:101px;" width="12" height="12" viewBox="0 0 12 12"><path d="M5.75 0 V7.3 M2.9 4.5 L5.75 7.3 L8.6 4.5" fill="none" stroke="#2a4582" stroke-width="1.25"/><path d="M2.6 6.3 H0.6 V10.2 Q0.6 10.9 1.3 10.9 H10.2 Q10.9 10.9 10.9 10.2 V6.3 H8.9" fill="none" stroke="#2a4582" stroke-width="1.25" stroke-linejoin="round"/></svg>
<div class="t" style="left:1032.7px;top:101.85px;font-size:11.16px;line-height:11.16px;color:#2a4582;font-weight:700;font-style:normal;transform:scaleX(0.9928);">Startup</div>
<svg style="position:absolute;left:1088.5px;top:101px;" width="12" height="12" viewBox="0 0 12 12"><path d="M5.75 0 V7.3 M2.9 4.5 L5.75 7.3 L8.6 4.5" fill="none" stroke="#2a4582" stroke-width="1.25"/><path d="M2.6 6.3 H0.6 V10.2 Q0.6 10.9 1.3 10.9 H10.2 Q10.9 10.9 10.9 10.2 V6.3 H8.9" fill="none" stroke="#2a4582" stroke-width="1.25" stroke-linejoin="round"/></svg>
<div class="t" style="left:1110.3px;top:101.85px;font-size:11.16px;line-height:11.16px;color:#2a4582;font-weight:700;font-style:normal;transform:scaleX(0.9787);">Current</div>
<svg style="position:absolute;left:1167.7px;top:100.8px;" width="10" height="12" viewBox="0 0 10 12"><path d="M1.4 0.6 H6 L8.9 3.5 V10.6 Q8.9 11.3 8.2 11.3 H1.4 Q0.7 11.3 0.7 10.6 V1.3 Q0.7 0.6 1.4 0.6 Z" fill="none" stroke="#a3a3a3" stroke-width="1.2"/><path d="M5.8 0.6 L8.9 3.7 H5.8 Z" fill="#a3a3a3"/><path d="M4.8 4.4 V7.6 M3.2 6 H6.4 M3.2 9 H6.4" stroke="#a3a3a3" stroke-width="1"/></svg>
<div class="t" style="left:1188.7px;top:101.85px;font-size:11.16px;line-height:11.16px;color:#a3a3a3;font-weight:700;font-style:normal;transform:scaleX(0.9300);">Changes</div>
<!--site:L43:106-->
<div style="position:absolute;left:260px;top:122px;width:988px;height:32px;background:#fff"></div>
<div style="position:absolute;left:416.0px;top:122px;width:1px;height:32px;background:#d3d3d3"></div>
<div style="position:absolute;left:512.8px;top:122px;width:1px;height:32px;background:#d3d3d3"></div>
<div style="position:absolute;left:824.4px;top:122px;width:1px;height:32px;background:#d3d3d3"></div>
<div style="position:absolute;left:921.1px;top:122px;width:1px;height:32px;background:#d3d3d3"></div>
<div style="position:absolute;left:991.9px;top:122px;width:1px;height:32px;background:#d3d3d3"></div>
<div class="t" style="left:268.2px;top:132.28px;font-size:13.02px;line-height:13.02px;color:#3d5290;font-weight:400;font-style:normal;transform:scaleX(0.9345);">L45R10</div>
<div class="t" style="left:425.2px;top:132.28px;font-size:13.02px;line-height:13.02px;color:#3d5290;font-weight:400;font-style:normal;transform:scaleX(0.9547);">L45</div>
<svg style="position:absolute;left:calc(428.3px + 20.73px);top:135px" width="13" height="7" viewBox="0 0 13 7"><path d="M5 0.8 H3.3 A2.7 2.7 0 0 0 3.3 6.2 H5 M8 0.8 H9.7 A2.7 2.7 0 0 1 9.7 6.2 H8 M4.2 3.5 H8.8" fill="none" stroke="#3d5290" stroke-width="1.3"/></svg>
<div class="t" style="left:522.2px;top:132.28px;font-size:13.02px;line-height:13.02px;color:#333333;font-weight:400;font-style:normal;transform:scaleX(0.9822);">3 days, 22 hours, 18 minutes</div>
<div class="t" style="left:833.2px;top:132.28px;font-size:13.02px;line-height:13.02px;color:#333333;font-weight:400;font-style:normal;transform:scaleX(0.9728);">10.45.255.110</div>
<div class="badge" style="left:926px;top:127px;height:22px;width:calc(34.12px + 7.5px);background:#86dcb4"></div>
<div class="t" style="left:930.2px;top:132.28px;font-size:13.02px;line-height:13.02px;color:#333333;font-weight:400;font-style:normal;transform:scaleX(0.9825);">saved</div>
<svg style="position:absolute;left:1010.5px;top:133px;" width="12" height="12" viewBox="0 0 12 12"><path d="M5.75 0 V7.3 M2.9 4.5 L5.75 7.3 L8.6 4.5" fill="none" stroke="#2a4582" stroke-width="1.25"/><path d="M2.6 6.3 H0.6 V10.2 Q0.6 10.9 1.3 10.9 H10.2 Q10.9 10.9 10.9 10.2 V6.3 H8.9" fill="none" stroke="#2a4582" stroke-width="1.25" stroke-linejoin="round"/></svg>
<div class="t" style="left:1032.7px;top:133.85px;font-size:11.16px;line-height:11.16px;color:#2a4582;font-weight:700;font-style:normal;transform:scaleX(0.9928);">Startup</div>
<svg style="position:absolute;left:1088.5px;top:133px;" width="12" height="12" viewBox="0 0 12 12"><path d="M5.75 0 V7.3 M2.9 4.5 L5.75 7.3 L8.6 4.5" fill="none" stroke="#2a4582" stroke-width="1.25"/><path d="M2.6 6.3 H0.6 V10.2 Q0.6 10.9 1.3 10.9 H10.2 Q10.9 10.9 10.9 10.2 V6.3 H8.9" fill="none" stroke="#2a4582" stroke-width="1.25" stroke-linejoin="round"/></svg>
<div class="t" style="left:1110.3px;top:133.85px;font-size:11.16px;line-height:11.16px;color:#2a4582;font-weight:700;font-style:normal;transform:scaleX(0.9787);">Current</div>
<svg style="position:absolute;left:1167.7px;top:132.8px;" width="10" height="12" viewBox="0 0 10 12"><path d="M1.4 0.6 H6 L8.9 3.5 V10.6 Q8.9 11.3 8.2 11.3 H1.4 Q0.7 11.3 0.7 10.6 V1.3 Q0.7 0.6 1.4 0.6 Z" fill="none" stroke="#a3a3a3" stroke-width="1.2"/><path d="M5.8 0.6 L8.9 3.7 H5.8 Z" fill="#a3a3a3"/><path d="M4.8 4.4 V7.6 M3.2 6 H6.4 M3.2 9 H6.4" stroke="#a3a3a3" stroke-width="1"/></svg>
<div class="t" style="left:1188.7px;top:133.85px;font-size:11.16px;line-height:11.16px;color:#a3a3a3;font-weight:700;font-style:normal;transform:scaleX(0.9300);">Changes</div>
<!--site:L45:138-->
<div style="position:absolute;left:260px;top:154px;width:988px;height:32px;background:#f5f5f5"></div>
<div style="position:absolute;left:416.0px;top:154px;width:1px;height:32px;background:#d3d3d3"></div>
<div style="position:absolute;left:512.8px;top:154px;width:1px;height:32px;background:#d3d3d3"></div>
<div style="position:absolute;left:824.4px;top:154px;width:1px;height:32px;background:#d3d3d3"></div>
<div style="position:absolute;left:921.1px;top:154px;width:1px;height:32px;background:#d3d3d3"></div>
<div style="position:absolute;left:991.9px;top:154px;width:1px;height:32px;background:#d3d3d3"></div>
<div class="t" style="left:268.2px;top:164.28px;font-size:13.02px;line-height:13.02px;color:#3d5290;font-weight:400;font-style:normal;transform:scaleX(0.9047);">L77R4-CORE2</div>
<div class="t" style="left:425.2px;top:164.28px;font-size:13.02px;line-height:13.02px;color:#3d5290;font-weight:400;font-style:normal;transform:scaleX(0.9547);">L77</div>
<svg style="position:absolute;left:calc(428.3px + 20.73px);top:167px" width="13" height="7" viewBox="0 0 13 7"><path d="M5 0.8 H3.3 A2.7 2.7 0 0 0 3.3 6.2 H5 M8 0.8 H9.7 A2.7 2.7 0 0 1 9.7 6.2 H8 M4.2 3.5 H8.8" fill="none" stroke="#3d5290" stroke-width="1.3"/></svg>
<div class="t" style="left:522.2px;top:164.28px;font-size:13.02px;line-height:13.02px;color:#333333;font-weight:400;font-style:normal;transform:scaleX(0.9822);">3 days, 22 hours, 22 minutes</div>
<div class="t" style="left:833.2px;top:164.28px;font-size:13.02px;line-height:13.02px;color:#333333;font-weight:400;font-style:normal;transform:scaleX(0.9616);">10.77.255.4</div>
<div class="badge" style="left:926px;top:159px;height:22px;width:calc(34.12px + 7.5px);background:#86dcb4"></div>
<div class="t" style="left:930.2px;top:164.28px;font-size:13.02px;line-height:13.02px;color:#333333;font-weight:400;font-style:normal;transform:scaleX(0.9825);">saved</div>
<svg style="position:absolute;left:1010.5px;top:165px;" width="12" height="12" viewBox="0 0 12 12"><path d="M5.75 0 V7.3 M2.9 4.5 L5.75 7.3 L8.6 4.5" fill="none" stroke="#2a4582" stroke-width="1.25"/><path d="M2.6 6.3 H0.6 V10.2 Q0.6 10.9 1.3 10.9 H10.2 Q10.9 10.9 10.9 10.2 V6.3 H8.9" fill="none" stroke="#2a4582" stroke-width="1.25" stroke-linejoin="round"/></svg>
<div class="t" style="left:1032.7px;top:165.85px;font-size:11.16px;line-height:11.16px;color:#2a4582;font-weight:700;font-style:normal;transform:scaleX(0.9928);">Startup</div>
<svg style="position:absolute;left:1088.5px;top:165px;" width="12" height="12" viewBox="0 0 12 12"><path d="M5.75 0 V7.3 M2.9 4.5 L5.75 7.3 L8.6 4.5" fill="none" stroke="#2a4582" stroke-width="1.25"/><path d="M2.6 6.3 H0.6 V10.2 Q0.6 10.9 1.3 10.9 H10.2 Q10.9 10.9 10.9 10.2 V6.3 H8.9" fill="none" stroke="#2a4582" stroke-width="1.25" stroke-linejoin="round"/></svg>
<div class="t" style="left:1110.3px;top:165.85px;font-size:11.16px;line-height:11.16px;color:#2a4582;font-weight:700;font-style:normal;transform:scaleX(0.9787);">Current</div>
<svg style="position:absolute;left:1167.7px;top:164.8px;" width="10" height="12" viewBox="0 0 10 12"><path d="M1.4 0.6 H6 L8.9 3.5 V10.6 Q8.9 11.3 8.2 11.3 H1.4 Q0.7 11.3 0.7 10.6 V1.3 Q0.7 0.6 1.4 0.6 Z" fill="none" stroke="#a3a3a3" stroke-width="1.2"/><path d="M5.8 0.6 L8.9 3.7 H5.8 Z" fill="#a3a3a3"/><path d="M4.8 4.4 V7.6 M3.2 6 H6.4 M3.2 9 H6.4" stroke="#a3a3a3" stroke-width="1"/></svg>
<div class="t" style="left:1188.7px;top:165.85px;font-size:11.16px;line-height:11.16px;color:#a3a3a3;font-weight:700;font-style:normal;transform:scaleX(0.9300);">Changes</div>
<!--site:L77:170-->
<div style="position:absolute;left:260px;top:186px;width:988px;height:32px;background:#fff"></div>
<div style="position:absolute;left:416.0px;top:186px;width:1px;height:32px;background:#d3d3d3"></div>
<div style="position:absolute;left:512.8px;top:186px;width:1px;height:32px;background:#d3d3d3"></div>
<div style="position:absolute;left:824.4px;top:186px;width:1px;height:32px;background:#d3d3d3"></div>
<div style="position:absolute;left:921.1px;top:186px;width:1px;height:32px;background:#d3d3d3"></div>
<div style="position:absolute;left:991.9px;top:186px;width:1px;height:32px;background:#d3d3d3"></div>
<div class="t" style="left:268.2px;top:196.28px;font-size:13.02px;line-height:13.02px;color:#3d5290;font-weight:400;font-style:normal;transform:scaleX(0.9460);">L67P9</div>
<div class="t" style="left:425.2px;top:196.28px;font-size:13.02px;line-height:13.02px;color:#3d5290;font-weight:400;font-style:normal;transform:scaleX(0.9547);">L67</div>
<svg style="position:absolute;left:calc(428.3px + 20.73px);top:199px" width="13" height="7" viewBox="0 0 13 7"><path d="M5 0.8 H3.3 A2.7 2.7 0 0 0 3.3 6.2 H5 M8 0.8 H9.7 A2.7 2.7 0 0 1 9.7 6.2 H8 M4.2 3.5 H8.8" fill="none" stroke="#3d5290" stroke-width="1.3"/></svg>
<div class="t" style="left:522.2px;top:196.28px;font-size:13.02px;line-height:13.02px;color:#333333;font-weight:400;font-style:normal;transform:scaleX(0.9822);">3 days, 22 hours, 24 minutes</div>
<div class="t" style="left:833.2px;top:196.28px;font-size:13.02px;line-height:13.02px;color:#333333;font-weight:400;font-style:normal;transform:scaleX(0.9615);">10.67.255.109</div>
<div class="badge" style="left:926px;top:191px;height:22px;width:calc(21.00px + 7.5px);background:#a1cbf5"></div>
<div class="t" style="left:930.2px;top:196.28px;font-size:13.02px;line-height:13.02px;color:#333333;font-weight:400;font-style:normal;transform:scaleX(0.9676);">N/A</div>
<svg style="position:absolute;left:1010.5px;top:197px;" width="12" height="12" viewBox="0 0 12 12"><path d="M5.75 0 V7.3 M2.9 4.5 L5.75 7.3 L8.6 4.5" fill="none" stroke="#a3a3a3" stroke-width="1.25"/><path d="M2.6 6.3 H0.6 V10.2 Q0.6 10.9 1.3 10.9 H10.2 Q10.9 10.9 10.9 10.2 V6.3 H8.9" fill="none" stroke="#a3a3a3" stroke-width="1.25" stroke-linejoin="round"/></svg>
<div class="t" style="left:1032.7px;top:197.85px;font-size:11.16px;line-height:11.16px;color:#a3a3a3;font-weight:700;font-style:normal;transform:scaleX(0.9928);">Startup</div>
<svg style="position:absolute;left:1088.5px;top:197px;" width="12" height="12" viewBox="0 0 12 12"><path d="M5.75 0 V7.3 M2.9 4.5 L5.75 7.3 L8.6 4.5" fill="none" stroke="#a3a3a3" stroke-width="1.25"/><path d="M2.6 6.3 H0.6 V10.2 Q0.6 10.9 1.3 10.9 H10.2 Q10.9 10.9 10.9 10.2 V6.3 H8.9" fill="none" stroke="#a3a3a3" stroke-width="1.25" stroke-linejoin="round"/></svg>
<div class="t" style="left:1110.3px;top:197.85px;font-size:11.16px;line-height:11.16px;color:#a3a3a3;font-weight:700;font-style:normal;transform:scaleX(0.9787);">Current</div>
<svg style="position:absolute;left:1167.7px;top:196.8px;" width="10" height="12" viewBox="0 0 10 12"><path d="M1.4 0.6 H6 L8.9 3.5 V10.6 Q8.9 11.3 8.2 11.3 H1.4 Q0.7 11.3 0.7 10.6 V1.3 Q0.7 0.6 1.4 0.6 Z" fill="none" stroke="#a3a3a3" stroke-width="1.2"/><path d="M5.8 0.6 L8.9 3.7 H5.8 Z" fill="#a3a3a3"/><path d="M4.8 4.4 V7.6 M3.2 6 H6.4 M3.2 9 H6.4" stroke="#a3a3a3" stroke-width="1"/></svg>
<div class="t" style="left:1188.7px;top:197.85px;font-size:11.16px;line-height:11.16px;color:#a3a3a3;font-weight:700;font-style:normal;transform:scaleX(0.9300);">Changes</div>
<!--site:L67:202-->
<div style="position:absolute;left:260px;top:218px;width:988px;height:32px;background:#f5f5f5"></div>
<div style="position:absolute;left:416.0px;top:218px;width:1px;height:32px;background:#d3d3d3"></div>
<div style="position:absolute;left:512.8px;top:218px;width:1px;height:32px;background:#d3d3d3"></div>
<div style="position:absolute;left:824.4px;top:218px;width:1px;height:32px;background:#d3d3d3"></div>
<div style="position:absolute;left:921.1px;top:218px;width:1px;height:32px;background:#d3d3d3"></div>
<div style="position:absolute;left:991.9px;top:218px;width:1px;height:32px;background:#d3d3d3"></div>
<div class="t" style="left:268.2px;top:228.28px;font-size:13.02px;line-height:13.02px;color:#3d5290;font-weight:400;font-style:normal;transform:scaleX(0.9844);">L71-CP1/GoodCompany</div>
<div class="t" style="left:425.2px;top:228.28px;font-size:13.02px;line-height:13.02px;color:#3d5290;font-weight:400;font-style:normal;transform:scaleX(0.9547);">L71</div>
<svg style="position:absolute;left:calc(428.3px + 20.73px);top:231px" width="13" height="7" viewBox="0 0 13 7"><path d="M5 0.8 H3.3 A2.7 2.7 0 0 0 3.3 6.2 H5 M8 0.8 H9.7 A2.7 2.7 0 0 1 9.7 6.2 H8 M4.2 3.5 H8.8" fill="none" stroke="#3d5290" stroke-width="1.3"/></svg>
<div class="t" style="left:522.2px;top:228.28px;font-size:13.02px;line-height:13.02px;color:#333333;font-weight:400;font-style:normal;transform:scaleX(0.9822);">3 days, 22 hours, 19 minutes</div>
<div class="t" style="left:833.2px;top:228.28px;font-size:13.02px;line-height:13.02px;color:#333333;font-weight:400;font-style:normal;transform:scaleX(0.9728);">10.71.112.120</div>
<div class="badge" style="left:926px;top:223px;height:22px;width:calc(34.12px + 7.5px);background:#86dcb4"></div>
<div class="t" style="left:930.2px;top:228.28px;font-size:13.02px;line-height:13.02px;color:#333333;font-weight:400;font-style:normal;transform:scaleX(0.9825);">saved</div>
<svg style="position:absolute;left:1010.5px;top:229px;" width="12" height="12" viewBox="0 0 12 12"><path d="M5.75 0 V7.3 M2.9 4.5 L5.75 7.3 L8.6 4.5" fill="none" stroke="#a3a3a3" stroke-width="1.25"/><path d="M2.6 6.3 H0.6 V10.2 Q0.6 10.9 1.3 10.9 H10.2 Q10.9 10.9 10.9 10.2 V6.3 H8.9" fill="none" stroke="#a3a3a3" stroke-width="1.25" stroke-linejoin="round"/></svg>
<div class="t" style="left:1032.7px;top:229.85px;font-size:11.16px;line-height:11.16px;color:#a3a3a3;font-weight:700;font-style:normal;transform:scaleX(0.9928);">Startup</div>
<svg style="position:absolute;left:1088.5px;top:229px;" width="12" height="12" viewBox="0 0 12 12"><path d="M5.75 0 V7.3 M2.9 4.5 L5.75 7.3 L8.6 4.5" fill="none" stroke="#2a4582" stroke-width="1.25"/><path d="M2.6 6.3 H0.6 V10.2 Q0.6 10.9 1.3 10.9 H10.2 Q10.9 10.9 10.9 10.2 V6.3 H8.9" fill="none" stroke="#2a4582" stroke-width="1.25" stroke-linejoin="round"/></svg>
<div class="t" style="left:1110.3px;top:229.85px;font-size:11.16px;line-height:11.16px;color:#2a4582;font-weight:700;font-style:normal;transform:scaleX(0.9787);">Current</div>
<svg style="position:absolute;left:1167.7px;top:228.8px;" width="10" height="12" viewBox="0 0 10 12"><path d="M1.4 0.6 H6 L8.9 3.5 V10.6 Q8.9 11.3 8.2 11.3 H1.4 Q0.7 11.3 0.7 10.6 V1.3 Q0.7 0.6 1.4 0.6 Z" fill="none" stroke="#a3a3a3" stroke-width="1.2"/><path d="M5.8 0.6 L8.9 3.7 H5.8 Z" fill="#a3a3a3"/><path d="M4.8 4.4 V7.6 M3.2 6 H6.4 M3.2 9 H6.4" stroke="#a3a3a3" stroke-width="1"/></svg>
<div class="t" style="left:1188.7px;top:229.85px;font-size:11.16px;line-height:11.16px;color:#a3a3a3;font-weight:700;font-style:normal;transform:scaleX(0.9300);">Changes</div>
<!--site:L71:234-->
<div style="position:absolute;left:260px;top:250px;width:988px;height:32px;background:#fff"></div>
<div style="position:absolute;left:416.0px;top:250px;width:1px;height:32px;background:#d3d3d3"></div>
<div style="position:absolute;left:512.8px;top:250px;width:1px;height:32px;background:#d3d3d3"></div>
<div style="position:absolute;left:824.4px;top:250px;width:1px;height:32px;background:#d3d3d3"></div>
<div style="position:absolute;left:921.1px;top:250px;width:1px;height:32px;background:#d3d3d3"></div>
<div style="position:absolute;left:991.9px;top:250px;width:1px;height:32px;background:#d3d3d3"></div>
<div class="t" style="left:268.2px;top:260.28px;font-size:13.02px;line-height:13.02px;color:#3d5290;font-weight:400;font-style:normal;transform:scaleX(0.9229);">L72AC24</div>
<div class="t" style="left:425.2px;top:260.28px;font-size:13.02px;line-height:13.02px;color:#3d5290;font-weight:400;font-style:normal;transform:scaleX(0.9547);">L72</div>
<svg style="position:absolute;left:calc(428.3px + 20.73px);top:263px" width="13" height="7" viewBox="0 0 13 7"><path d="M5 0.8 H3.3 A2.7 2.7 0 0 0 3.3 6.2 H5 M8 0.8 H9.7 A2.7 2.7 0 0 1 9.7 6.2 H8 M4.2 3.5 H8.8" fill="none" stroke="#3d5290" stroke-width="1.3"/></svg>
<div class="t" style="left:522.2px;top:260.28px;font-size:13.02px;line-height:13.02px;color:#333333;font-weight:400;font-style:normal;transform:scaleX(0.9822);">3 days, 22 hours, 26 minutes</div>
<div class="t" style="left:833.2px;top:260.28px;font-size:13.02px;line-height:13.02px;color:#333333;font-weight:400;font-style:normal;transform:scaleX(0.9728);">10.72.119.161</div>
<div class="badge" style="left:926px;top:255px;height:22px;width:calc(34.12px + 7.5px);background:#86dcb4"></div>
<div class="t" style="left:930.2px;top:260.28px;font-size:13.02px;line-height:13.02px;color:#333333;font-weight:400;font-style:normal;transform:scaleX(0.9825);">saved</div>
<svg style="position:absolute;left:1010.5px;top:261px;" width="12" height="12" viewBox="0 0 12 12"><path d="M5.75 0 V7.3 M2.9 4.5 L5.75 7.3 L8.6 4.5" fill="none" stroke="#2a4582" stroke-width="1.25"/><path d="M2.6 6.3 H0.6 V10.2 Q0.6 10.9 1.3 10.9 H10.2 Q10.9 10.9 10.9 10.2 V6.3 H8.9" fill="none" stroke="#2a4582" stroke-width="1.25" stroke-linejoin="round"/></svg>
<div class="t" style="left:1032.7px;top:261.85px;font-size:11.16px;line-height:11.16px;color:#2a4582;font-weight:700;font-style:normal;transform:scaleX(0.9928);">Startup</div>
<svg style="position:absolute;left:1088.5px;top:261px;" width="12" height="12" viewBox="0 0 12 12"><path d="M5.75 0 V7.3 M2.9 4.5 L5.75 7.3 L8.6 4.5" fill="none" stroke="#2a4582" stroke-width="1.25"/><path d="M2.6 6.3 H0.6 V10.2 Q0.6 10.9 1.3 10.9 H10.2 Q10.9 10.9 10.9 10.2 V6.3 H8.9" fill="none" stroke="#2a4582" stroke-width="1.25" stroke-linejoin="round"/></svg>
<div class="t" style="left:1110.3px;top:261.85px;font-size:11.16px;line-height:11.16px;color:#2a4582;font-weight:700;font-style:normal;transform:scaleX(0.9787);">Current</div>
<svg style="position:absolute;left:1167.7px;top:260.8px;" width="10" height="12" viewBox="0 0 10 12"><path d="M1.4 0.6 H6 L8.9 3.5 V10.6 Q8.9 11.3 8.2 11.3 H1.4 Q0.7 11.3 0.7 10.6 V1.3 Q0.7 0.6 1.4 0.6 Z" fill="none" stroke="#a3a3a3" stroke-width="1.2"/><path d="M5.8 0.6 L8.9 3.7 H5.8 Z" fill="#a3a3a3"/><path d="M4.8 4.4 V7.6 M3.2 6 H6.4 M3.2 9 H6.4" stroke="#a3a3a3" stroke-width="1"/></svg>
<div class="t" style="left:1188.7px;top:261.85px;font-size:11.16px;line-height:11.16px;color:#a3a3a3;font-weight:700;font-style:normal;transform:scaleX(0.9300);">Changes</div>
<!--site:L72:266-->
<div style="position:absolute;left:260px;top:282px;width:988px;height:32px;background:#f5f5f5"></div>
<div style="position:absolute;left:416.0px;top:282px;width:1px;height:32px;background:#d3d3d3"></div>
<div style="position:absolute;left:512.8px;top:282px;width:1px;height:32px;background:#d3d3d3"></div>
<div style="position:absolute;left:824.4px;top:282px;width:1px;height:32px;background:#d3d3d3"></div>
<div style="position:absolute;left:921.1px;top:282px;width:1px;height:32px;background:#d3d3d3"></div>
<div style="position:absolute;left:991.9px;top:282px;width:1px;height:32px;background:#d3d3d3"></div>
<div class="t" style="left:268.2px;top:292.28px;font-size:13.02px;line-height:13.02px;color:#3d5290;font-weight:400;font-style:normal;transform:scaleX(0.9209);">L77R10-LEAF4</div>
<div class="t" style="left:425.2px;top:292.28px;font-size:13.02px;line-height:13.02px;color:#3d5290;font-weight:400;font-style:normal;transform:scaleX(0.9547);">L77</div>
<svg style="position:absolute;left:calc(428.3px + 20.73px);top:295px" width="13" height="7" viewBox="0 0 13 7"><path d="M5 0.8 H3.3 A2.7 2.7 0 0 0 3.3 6.2 H5 M8 0.8 H9.7 A2.7 2.7 0 0 1 9.7 6.2 H8 M4.2 3.5 H8.8" fill="none" stroke="#3d5290" stroke-width="1.3"/></svg>
<div class="t" style="left:522.2px;top:292.28px;font-size:13.02px;line-height:13.02px;color:#333333;font-weight:400;font-style:normal;transform:scaleX(0.9822);">3 days, 21 hours, 51 minutes</div>
<div class="t" style="left:833.2px;top:292.28px;font-size:13.02px;line-height:13.02px;color:#333333;font-weight:400;font-style:normal;transform:scaleX(0.9618);">10.77.255.10</div>
<div class="badge" style="left:926px;top:287px;height:22px;width:calc(21.00px + 7.5px);background:#a1cbf5"></div>
<div class="t" style="left:930.2px;top:292.28px;font-size:13.02px;line-height:13.02px;color:#333333;font-weight:400;font-style:normal;transform:scaleX(0.9676);">N/A</div>
<svg style="position:absolute;left:1010.5px;top:293px;" width="12" height="12" viewBox="0 0 12 12"><path d="M5.75 0 V7.3 M2.9 4.5 L5.75 7.3 L8.6 4.5" fill="none" stroke="#a3a3a3" stroke-width="1.25"/><path d="M2.6 6.3 H0.6 V10.2 Q0.6 10.9 1.3 10.9 H10.2 Q10.9 10.9 10.9 10.2 V6.3 H8.9" fill="none" stroke="#a3a3a3" stroke-width="1.25" stroke-linejoin="round"/></svg>
<div class="t" style="left:1032.7px;top:293.85px;font-size:11.16px;line-height:11.16px;color:#a3a3a3;font-weight:700;font-style:normal;transform:scaleX(0.9928);">Startup</div>
<svg style="position:absolute;left:1088.5px;top:293px;" width="12" height="12" viewBox="0 0 12 12"><path d="M5.75 0 V7.3 M2.9 4.5 L5.75 7.3 L8.6 4.5" fill="none" stroke="#a3a3a3" stroke-width="1.25"/><path d="M2.6 6.3 H0.6 V10.2 Q0.6 10.9 1.3 10.9 H10.2 Q10.9 10.9 10.9 10.2 V6.3 H8.9" fill="none" stroke="#a3a3a3" stroke-width="1.25" stroke-linejoin="round"/></svg>
<div class="t" style="left:1110.3px;top:293.85px;font-size:11.16px;line-height:11.16px;color:#a3a3a3;font-weight:700;font-style:normal;transform:scaleX(0.9787);">Current</div>
<svg style="position:absolute;left:1167.7px;top:292.8px;" width="10" height="12" viewBox="0 0 10 12"><path d="M1.4 0.6 H6 L8.9 3.5 V10.6 Q8.9 11.3 8.2 11.3 H1.4 Q0.7 11.3 0.7 10.6 V1.3 Q0.7 0.6 1.4 0.6 Z" fill="none" stroke="#a3a3a3" stroke-width="1.2"/><path d="M5.8 0.6 L8.9 3.7 H5.8 Z" fill="#a3a3a3"/><path d="M4.8 4.4 V7.6 M3.2 6 H6.4 M3.2 9 H6.4" stroke="#a3a3a3" stroke-width="1"/></svg>
<div class="t" style="left:1188.7px;top:293.85px;font-size:11.16px;line-height:11.16px;color:#a3a3a3;font-weight:700;font-style:normal;transform:scaleX(0.9300);">Changes</div>
<!--site:L77:298-->
<div style="position:absolute;left:260px;top:314px;width:988px;height:32px;background:#fff"></div>
<div style="position:absolute;left:416.0px;top:314px;width:1px;height:32px;background:#d3d3d3"></div>
<div style="position:absolute;left:512.8px;top:314px;width:1px;height:32px;background:#d3d3d3"></div>
<div style="position:absolute;left:824.4px;top:314px;width:1px;height:32px;background:#d3d3d3"></div>
<div style="position:absolute;left:921.1px;top:314px;width:1px;height:32px;background:#d3d3d3"></div>
<div style="position:absolute;left:991.9px;top:314px;width:1px;height:32px;background:#d3d3d3"></div>
<div class="t" style="left:268.2px;top:324.28px;font-size:13.02px;line-height:13.02px;color:#3d5290;font-weight:400;font-style:normal;transform:scaleX(0.9308);">L77R11-LEAF5</div>
<div class="t" style="left:425.2px;top:324.28px;font-size:13.02px;line-height:13.02px;color:#3d5290;font-weight:400;font-style:normal;transform:scaleX(0.9547);">L77</div>
<svg style="position:absolute;left:calc(428.3px + 20.73px);top:327px" width="13" height="7" viewBox="0 0 13 7"><path d="M5 0.8 H3.3 A2.7 2.7 0 0 0 3.3 6.2 H5 M8 0.8 H9.7 A2.7 2.7 0 0 1 9.7 6.2 H8 M4.2 3.5 H8.8" fill="none" stroke="#3d5290" stroke-width="1.3"/></svg>
<div class="t" style="left:522.2px;top:324.28px;font-size:13.02px;line-height:13.02px;color:#333333;font-weight:400;font-style:normal;transform:scaleX(0.9822);">3 days, 22 hours, 19 minutes</div>
<div class="t" style="left:833.2px;top:324.28px;font-size:13.02px;line-height:13.02px;color:#333333;font-weight:400;font-style:normal;transform:scaleX(0.9742);">10.77.255.11</div>
<div class="badge" style="left:926px;top:319px;height:22px;width:calc(50.30px + 7.5px);background:#fcdb8b"></div>
<div class="t" style="left:930.2px;top:324.28px;font-size:13.02px;line-height:13.02px;color:#333333;font-weight:400;font-style:normal;transform:scaleX(1.0069);">changed</div>
<svg style="position:absolute;left:1010.5px;top:325px;" width="12" height="12" viewBox="0 0 12 12"><path d="M5.75 0 V7.3 M2.9 4.5 L5.75 7.3 L8.6 4.5" fill="none" stroke="#2a4582" stroke-width="1.25"/><path d="M2.6 6.3 H0.6 V10.2 Q0.6 10.9 1.3 10.9 H10.2 Q10.9 10.9 10.9 10.2 V6.3 H8.9" fill="none" stroke="#2a4582" stroke-width="1.25" stroke-linejoin="round"/></svg>
<div class="t" style="left:1032.7px;top:325.85px;font-size:11.16px;line-height:11.16px;color:#2a4582;font-weight:700;font-style:normal;transform:scaleX(0.9928);">Startup</div>
<svg style="position:absolute;left:1088.5px;top:325px;" width="12" height="12" viewBox="0 0 12 12"><path d="M5.75 0 V7.3 M2.9 4.5 L5.75 7.3 L8.6 4.5" fill="none" stroke="#2a4582" stroke-width="1.25"/><path d="M2.6 6.3 H0.6 V10.2 Q0.6 10.9 1.3 10.9 H10.2 Q10.9 10.9 10.9 10.2 V6.3 H8.9" fill="none" stroke="#2a4582" stroke-width="1.25" stroke-linejoin="round"/></svg>
<div class="t" style="left:1110.3px;top:325.85px;font-size:11.16px;line-height:11.16px;color:#2a4582;font-weight:700;font-style:normal;transform:scaleX(0.9787);">Current</div>
<svg style="position:absolute;left:1167.7px;top:324.8px;" width="10" height="12" viewBox="0 0 10 12"><path d="M1.4 0.6 H6 L8.9 3.5 V10.6 Q8.9 11.3 8.2 11.3 H1.4 Q0.7 11.3 0.7 10.6 V1.3 Q0.7 0.6 1.4 0.6 Z" fill="none" stroke="#2a4582" stroke-width="1.2"/><path d="M5.8 0.6 L8.9 3.7 H5.8 Z" fill="#2a4582"/><path d="M4.8 4.4 V7.6 M3.2 6 H6.4 M3.2 9 H6.4" stroke="#2a4582" stroke-width="1"/></svg>
<div class="t" style="left:1188.7px;top:325.85px;font-size:11.16px;line-height:11.16px;color:#2a4582;font-weight:700;font-style:normal;transform:scaleX(0.9300);">Changes</div>
<!--site:L77:330-->
<div style="position:absolute;left:260px;top:346px;width:988px;height:32px;background:#f5f5f5"></div>
<div style="position:absolute;left:416.0px;top:346px;width:1px;height:32px;background:#d3d3d3"></div>
<div style="position:absolute;left:512.8px;top:346px;width:1px;height:32px;background:#d3d3d3"></div>
<div style="position:absolute;left:824.4px;top:346px;width:1px;height:32px;background:#d3d3d3"></div>
<div style="position:absolute;left:921.1px;top:346px;width:1px;height:32px;background:#d3d3d3"></div>
<div style="position:absolute;left:991.9px;top:346px;width:1px;height:32px;background:#d3d3d3"></div>
<div class="t" style="left:268.2px;top:356.28px;font-size:13.02px;line-height:13.02px;color:#3d5290;font-weight:400;font-style:normal;transform:scaleX(0.9079);">L39EXR12</div>
<div class="t" style="left:425.2px;top:356.28px;font-size:13.02px;line-height:13.02px;color:#3d5290;font-weight:400;font-style:normal;transform:scaleX(0.9547);">L39</div>
<svg style="position:absolute;left:calc(428.3px + 20.73px);top:359px" width="13" height="7" viewBox="0 0 13 7"><path d="M5 0.8 H3.3 A2.7 2.7 0 0 0 3.3 6.2 H5 M8 0.8 H9.7 A2.7 2.7 0 0 1 9.7 6.2 H8 M4.2 3.5 H8.8" fill="none" stroke="#3d5290" stroke-width="1.3"/></svg>
<div class="t" style="left:522.2px;top:356.28px;font-size:13.02px;line-height:13.02px;color:#333333;font-weight:400;font-style:normal;transform:scaleX(0.9822);">3 days, 22 hours, 25 minutes</div>
<div class="t" style="left:833.2px;top:356.28px;font-size:13.02px;line-height:13.02px;color:#333333;font-weight:400;font-style:normal;transform:scaleX(0.9728);">10.39.255.112</div>
<div class="badge" style="left:926px;top:351px;height:22px;width:calc(34.12px + 7.5px);background:#86dcb4"></div>
<div class="t" style="left:930.2px;top:356.28px;font-size:13.02px;line-height:13.02px;color:#333333;font-weight:400;font-style:normal;transform:scaleX(0.9825);">saved</div>
<svg style="position:absolute;left:1010.5px;top:357px;" width="12" height="12" viewBox="0 0 12 12"><path d="M5.75 0 V7.3 M2.9 4.5 L5.75 7.3 L8.6 4.5" fill="none" stroke="#2a4582" stroke-width="1.25"/><path d="M2.6 6.3 H0.6 V10.2 Q0.6 10.9 1.3 10.9 H10.2 Q10.9 10.9 10.9 10.2 V6.3 H8.9" fill="none" stroke="#2a4582" stroke-width="1.25" stroke-linejoin="round"/></svg>
<div class="t" style="left:1032.7px;top:357.85px;font-size:11.16px;line-height:11.16px;color:#2a4582;font-weight:700;font-style:normal;transform:scaleX(0.9928);">Startup</div>
<svg style="position:absolute;left:1088.5px;top:357px;" width="12" height="12" viewBox="0 0 12 12"><path d="M5.75 0 V7.3 M2.9 4.5 L5.75 7.3 L8.6 4.5" fill="none" stroke="#2a4582" stroke-width="1.25"/><path d="M2.6 6.3 H0.6 V10.2 Q0.6 10.9 1.3 10.9 H10.2 Q10.9 10.9 10.9 10.2 V6.3 H8.9" fill="none" stroke="#2a4582" stroke-width="1.25" stroke-linejoin="round"/></svg>
<div class="t" style="left:1110.3px;top:357.85px;font-size:11.16px;line-height:11.16px;color:#2a4582;font-weight:700;font-style:normal;transform:scaleX(0.9787);">Current</div>
<svg style="position:absolute;left:1167.7px;top:356.8px;" width="10" height="12" viewBox="0 0 10 12"><path d="M1.4 0.6 H6 L8.9 3.5 V10.6 Q8.9 11.3 8.2 11.3 H1.4 Q0.7 11.3 0.7 10.6 V1.3 Q0.7 0.6 1.4 0.6 Z" fill="none" stroke="#a3a3a3" stroke-width="1.2"/><path d="M5.8 0.6 L8.9 3.7 H5.8 Z" fill="#a3a3a3"/><path d="M4.8 4.4 V7.6 M3.2 6 H6.4 M3.2 9 H6.4" stroke="#a3a3a3" stroke-width="1"/></svg>
<div class="t" style="left:1188.7px;top:357.85px;font-size:11.16px;line-height:11.16px;color:#a3a3a3;font-weight:700;font-style:normal;transform:scaleX(0.9300);">Changes</div>
<!--site:L39:362-->
<div style="position:absolute;left:260px;top:378px;width:988px;height:32px;background:#fff"></div>
<div style="position:absolute;left:416.0px;top:378px;width:1px;height:32px;background:#d3d3d3"></div>
<div style="position:absolute;left:512.8px;top:378px;width:1px;height:32px;background:#d3d3d3"></div>
<div style="position:absolute;left:824.4px;top:378px;width:1px;height:32px;background:#d3d3d3"></div>
<div style="position:absolute;left:921.1px;top:378px;width:1px;height:32px;background:#d3d3d3"></div>
<div style="position:absolute;left:991.9px;top:378px;width:1px;height:32px;background:#d3d3d3"></div>
<div class="t" style="left:268.2px;top:388.28px;font-size:13.02px;line-height:13.02px;color:#3d5290;font-weight:400;font-style:normal;transform:scaleX(0.9959);">L71-CP-embedded-mng</div>
<div class="t" style="left:425.2px;top:388.28px;font-size:13.02px;line-height:13.02px;color:#3d5290;font-weight:400;font-style:normal;transform:scaleX(0.9547);">L71</div>
<svg style="position:absolute;left:calc(428.3px + 20.73px);top:391px" width="13" height="7" viewBox="0 0 13 7"><path d="M5 0.8 H3.3 A2.7 2.7 0 0 0 3.3 6.2 H5 M8 0.8 H9.7 A2.7 2.7 0 0 1 9.7 6.2 H8 M4.2 3.5 H8.8" fill="none" stroke="#3d5290" stroke-width="1.3"/></svg>
<div class="t" style="left:522.2px;top:388.28px;font-size:13.02px;line-height:13.02px;color:#333333;font-weight:400;font-style:normal;transform:scaleX(0.9822);">3 days, 22 hours, 14 minutes</div>
<div class="t" style="left:833.2px;top:388.28px;font-size:13.02px;line-height:13.02px;color:#333333;font-weight:400;font-style:normal;transform:scaleX(0.9728);">10.71.112.141</div>
<div class="badge" style="left:926px;top:383px;height:22px;width:calc(34.12px + 7.5px);background:#86dcb4"></div>
<div class="t" style="left:930.2px;top:388.28px;font-size:13.02px;line-height:13.02px;color:#333333;font-weight:400;font-style:normal;transform:scaleX(0.9825);">saved</div>
<svg style="position:absolute;left:1010.5px;top:389px;" width="12" height="12" viewBox="0 0 12 12"><path d="M5.75 0 V7.3 M2.9 4.5 L5.75 7.3 L8.6 4.5" fill="none" stroke="#a3a3a3" stroke-width="1.25"/><path d="M2.6 6.3 H0.6 V10.2 Q0.6 10.9 1.3 10.9 H10.2 Q10.9 10.9 10.9 10.2 V6.3 H8.9" fill="none" stroke="#a3a3a3" stroke-width="1.25" stroke-linejoin="round"/></svg>
<div class="t" style="left:1032.7px;top:389.85px;font-size:11.16px;line-height:11.16px;color:#a3a3a3;font-weight:700;font-style:normal;transform:scaleX(0.9928);">Startup</div>
<svg style="position:absolute;left:1088.5px;top:389px;" width="12" height="12" viewBox="0 0 12 12"><path d="M5.75 0 V7.3 M2.9 4.5 L5.75 7.3 L8.6 4.5" fill="none" stroke="#2a4582" stroke-width="1.25"/><path d="M2.6 6.3 H0.6 V10.2 Q0.6 10.9 1.3 10.9 H10.2 Q10.9 10.9 10.9 10.2 V6.3 H8.9" fill="none" stroke="#2a4582" stroke-width="1.25" stroke-linejoin="round"/></svg>
<div class="t" style="left:1110.3px;top:389.85px;font-size:11.16px;line-height:11.16px;color:#2a4582;font-weight:700;font-style:normal;transform:scaleX(0.9787);">Current</div>
<svg style="position:absolute;left:1167.7px;top:388.8px;" width="10" height="12" viewBox="0 0 10 12"><path d="M1.4 0.6 H6 L8.9 3.5 V10.6 Q8.9 11.3 8.2 11.3 H1.4 Q0.7 11.3 0.7 10.6 V1.3 Q0.7 0.6 1.4 0.6 Z" fill="none" stroke="#a3a3a3" stroke-width="1.2"/><path d="M5.8 0.6 L8.9 3.7 H5.8 Z" fill="#a3a3a3"/><path d="M4.8 4.4 V7.6 M3.2 6 H6.4 M3.2 9 H6.4" stroke="#a3a3a3" stroke-width="1"/></svg>
<div class="t" style="left:1188.7px;top:389.85px;font-size:11.16px;line-height:11.16px;color:#a3a3a3;font-weight:700;font-style:normal;transform:scaleX(0.9300);">Changes</div>
<!--site:L71:394-->
<div style="position:absolute;left:260px;top:410px;width:988px;height:32px;background:#f5f5f5"></div>
<div style="position:absolute;left:416.0px;top:410px;width:1px;height:32px;background:#d3d3d3"></div>
<div style="position:absolute;left:512.8px;top:410px;width:1px;height:32px;background:#d3d3d3"></div>
<div style="position:absolute;left:824.4px;top:410px;width:1px;height:32px;background:#d3d3d3"></div>
<div style="position:absolute;left:921.1px;top:410px;width:1px;height:32px;background:#d3d3d3"></div>
<div style="position:absolute;left:991.9px;top:410px;width:1px;height:32px;background:#d3d3d3"></div>
<div class="t" style="left:268.2px;top:420.28px;font-size:13.02px;line-height:13.02px;color:#3d5290;font-weight:400;font-style:normal;transform:scaleX(0.9013);">L31EXR2</div>
<div class="t" style="left:425.2px;top:420.28px;font-size:13.02px;line-height:13.02px;color:#3d5290;font-weight:400;font-style:normal;transform:scaleX(0.9547);">L31</div>
<svg style="position:absolute;left:calc(428.3px + 20.73px);top:423px" width="13" height="7" viewBox="0 0 13 7"><path d="M5 0.8 H3.3 A2.7 2.7 0 0 0 3.3 6.2 H5 M8 0.8 H9.7 A2.7 2.7 0 0 1 9.7 6.2 H8 M4.2 3.5 H8.8" fill="none" stroke="#3d5290" stroke-width="1.3"/></svg>
<div class="t" style="left:522.2px;top:420.28px;font-size:13.02px;line-height:13.02px;color:#333333;font-weight:400;font-style:normal;transform:scaleX(0.9822);">3 days, 22 hours, 21 minutes</div>
<div class="t" style="left:833.2px;top:420.28px;font-size:13.02px;line-height:13.02px;color:#333333;font-weight:400;font-style:normal;transform:scaleX(0.9615);">10.31.255.102</div>
<div class="badge" style="left:926px;top:415px;height:22px;width:calc(34.12px + 7.5px);background:#86dcb4"></div>
<div class="t" style="left:930.2px;top:420.28px;font-size:13.02px;line-height:13.02px;color:#333333;font-weight:400;font-style:normal;transform:scaleX(0.9825);">saved</div>
<svg style="position:absolute;left:1010.5px;top:421px;" width="12" height="12" viewBox="0 0 12 12"><path d="M5.75 0 V7.3 M2.9 4.5 L5.75 7.3 L8.6 4.5" fill="none" stroke="#2a4582" stroke-width="1.25"/><path d="M2.6 6.3 H0.6 V10.2 Q0.6 10.9 1.3 10.9 H10.2 Q10.9 10.9 10.9 10.2 V6.3 H8.9" fill="none" stroke="#2a4582" stroke-width="1.25" stroke-linejoin="round"/></svg>
<div class="t" style="left:1032.7px;top:421.85px;font-size:11.16px;line-height:11.16px;color:#2a4582;font-weight:700;font-style:normal;transform:scaleX(0.9928);">Startup</div>
<svg style="position:absolute;left:1088.5px;top:421px;" width="12" height="12" viewBox="0 0 12 12"><path d="M5.75 0 V7.3 M2.9 4.5 L5.75 7.3 L8.6 4.5" fill="none" stroke="#2a4582" stroke-width="1.25"/><path d="M2.6 6.3 H0.6 V10.2 Q0.6 10.9 1.3 10.9 H10.2 Q10.9 10.9 10.9 10.2 V6.3 H8.9" fill="none" stroke="#2a4582" stroke-width="1.25" stroke-linejoin="round"/></svg>
<div class="t" style="left:1110.3px;top:421.85px;font-size:11.16px;line-height:11.16px;color:#2a4582;font-weight:700;font-style:normal;transform:scaleX(0.9787);">Current</div>
<svg style="position:absolute;left:1167.7px;top:420.8px;" width="10" height="12" viewBox="0 0 10 12"><path d="M1.4 0.6 H6 L8.9 3.5 V10.6 Q8.9 11.3 8.2 11.3 H1.4 Q0.7 11.3 0.7 10.6 V1.3 Q0.7 0.6 1.4 0.6 Z" fill="none" stroke="#a3a3a3" stroke-width="1.2"/><path d="M5.8 0.6 L8.9 3.7 H5.8 Z" fill="#a3a3a3"/><path d="M4.8 4.4 V7.6 M3.2 6 H6.4 M3.2 9 H6.4" stroke="#a3a3a3" stroke-width="1"/></svg>
<div class="t" style="left:1188.7px;top:421.85px;font-size:11.16px;line-height:11.16px;color:#a3a3a3;font-weight:700;font-style:normal;transform:scaleX(0.9300);">Changes</div>
<!--site:L31:426-->
<div style="position:absolute;left:260px;top:442px;width:988px;height:32px;background:#fff"></div>
<div style="position:absolute;left:416.0px;top:442px;width:1px;height:32px;background:#d3d3d3"></div>
<div style="position:absolute;left:512.8px;top:442px;width:1px;height:32px;background:#d3d3d3"></div>
<div style="position:absolute;left:824.4px;top:442px;width:1px;height:32px;background:#d3d3d3"></div>
<div style="position:absolute;left:921.1px;top:442px;width:1px;height:32px;background:#d3d3d3"></div>
<div style="position:absolute;left:991.9px;top:442px;width:1px;height:32px;background:#d3d3d3"></div>
<div class="t" style="left:268.2px;top:452.28px;font-size:13.02px;line-height:13.02px;color:#3d5290;font-weight:400;font-style:normal;transform:scaleX(0.9229);">L43AC59</div>
<div class="t" style="left:425.2px;top:452.28px;font-size:13.02px;line-height:13.02px;color:#3d5290;font-weight:400;font-style:normal;transform:scaleX(0.9547);">L43</div>
<svg style="position:absolute;left:calc(428.3px + 20.73px);top:455px" width="13" height="7" viewBox="0 0 13 7"><path d="M5 0.8 H3.3 A2.7 2.7 0 0 0 3.3 6.2 H5 M8 0.8 H9.7 A2.7 2.7 0 0 1 9.7 6.2 H8 M4.2 3.5 H8.8" fill="none" stroke="#3d5290" stroke-width="1.3"/></svg>
<div class="t" style="left:522.2px;top:452.28px;font-size:13.02px;line-height:13.02px;color:#333333;font-weight:400;font-style:normal;transform:scaleX(0.9822);">3 days, 22 hours, 21 minutes</div>
<div class="t" style="left:833.2px;top:452.28px;font-size:13.02px;line-height:13.02px;color:#333333;font-weight:400;font-style:normal;transform:scaleX(0.9615);">10.43.159.185</div>
<div class="badge" style="left:926px;top:447px;height:22px;width:calc(34.12px + 7.5px);background:#86dcb4"></div>
<div class="t" style="left:930.2px;top:452.28px;font-size:13.02px;line-height:13.02px;color:#333333;font-weight:400;font-style:normal;transform:scaleX(0.9825);">saved</div>
<svg style="position:absolute;left:1010.5px;top:453px;" width="12" height="12" viewBox="0 0 12 12"><path d="M5.75 0 V7.3 M2.9 4.5 L5.75 7.3 L8.6 4.5" fill="none" stroke="#2a4582" stroke-width="1.25"/><path d="M2.6 6.3 H0.6 V10.2 Q0.6 10.9 1.3 10.9 H10.2 Q10.9 10.9 10.9 10.2 V6.3 H8.9" fill="none" stroke="#2a4582" stroke-width="1.25" stroke-linejoin="round"/></svg>
<div class="t" style="left:1032.7px;top:453.85px;font-size:11.16px;line-height:11.16px;color:#2a4582;font-weight:700;font-style:normal;transform:scaleX(0.9928);">Startup</div>
<svg style="position:absolute;left:1088.5px;top:453px;" width="12" height="12" viewBox="0 0 12 12"><path d="M5.75 0 V7.3 M2.9 4.5 L5.75 7.3 L8.6 4.5" fill="none" stroke="#2a4582" stroke-width="1.25"/><path d="M2.6 6.3 H0.6 V10.2 Q0.6 10.9 1.3 10.9 H10.2 Q10.9 10.9 10.9 10.2 V6.3 H8.9" fill="none" stroke="#2a4582" stroke-width="1.25" stroke-linejoin="round"/></svg>
<div class="t" style="left:1110.3px;top:453.85px;font-size:11.16px;line-height:11.16px;color:#2a4582;font-weight:700;font-style:normal;transform:scaleX(0.9787);">Current</div>
<svg style="position:absolute;left:1167.7px;top:452.8px;" width="10" height="12" viewBox="0 0 10 12"><path d="M1.4 0.6 H6 L8.9 3.5 V10.6 Q8.9 11.3 8.2 11.3 H1.4 Q0.7 11.3 0.7 10.6 V1.3 Q0.7 0.6 1.4 0.6 Z" fill="none" stroke="#a3a3a3" stroke-width="1.2"/><path d="M5.8 0.6 L8.9 3.7 H5.8 Z" fill="#a3a3a3"/><path d="M4.8 4.4 V7.6 M3.2 6 H6.4 M3.2 9 H6.4" stroke="#a3a3a3" stroke-width="1"/></svg>
<div class="t" style="left:1188.7px;top:453.85px;font-size:11.16px;line-height:11.16px;color:#a3a3a3;font-weight:700;font-style:normal;transform:scaleX(0.9300);">Changes</div>
<!--site:L43:458-->
<div style="position:absolute;left:260px;top:474px;width:988px;height:32px;background:#f5f5f5"></div>
<div style="position:absolute;left:416.0px;top:474px;width:1px;height:32px;background:#d3d3d3"></div>
<div style="position:absolute;left:512.8px;top:474px;width:1px;height:32px;background:#d3d3d3"></div>
<div style="position:absolute;left:824.4px;top:474px;width:1px;height:32px;background:#d3d3d3"></div>
<div style="position:absolute;left:921.1px;top:474px;width:1px;height:32px;background:#d3d3d3"></div>
<div style="position:absolute;left:991.9px;top:474px;width:1px;height:32px;background:#d3d3d3"></div>
<div class="t" style="left:268.2px;top:484.28px;font-size:13.02px;line-height:13.02px;color:#3d5290;font-weight:400;font-style:normal;transform:scaleX(0.9425);">L35AC115</div>
<div class="t" style="left:425.2px;top:484.28px;font-size:13.02px;line-height:13.02px;color:#3d5290;font-weight:400;font-style:normal;transform:scaleX(0.9547);">L35</div>
<svg style="position:absolute;left:calc(428.3px + 20.73px);top:487px" width="13" height="7" viewBox="0 0 13 7"><path d="M5 0.8 H3.3 A2.7 2.7 0 0 0 3.3 6.2 H5 M8 0.8 H9.7 A2.7 2.7 0 0 1 9.7 6.2 H8 M4.2 3.5 H8.8" fill="none" stroke="#3d5290" stroke-width="1.3"/></svg>
<div class="t" style="left:522.2px;top:484.28px;font-size:13.02px;line-height:13.02px;color:#333333;font-weight:400;font-style:normal;transform:scaleX(0.9822);">3 days, 22 hours, 25 minutes</div>
<div class="t" style="left:833.2px;top:484.28px;font-size:13.02px;line-height:13.02px;color:#333333;font-weight:400;font-style:normal;transform:scaleX(0.9728);">10.35.119.175</div>
<div class="badge" style="left:926px;top:479px;height:22px;width:calc(34.12px + 7.5px);background:#86dcb4"></div>
<div class="t" style="left:930.2px;top:484.28px;font-size:13.02px;line-height:13.02px;color:#333333;font-weight:400;font-style:normal;transform:scaleX(0.9825);">saved</div>
<svg style="position:absolute;left:1010.5px;top:485px;" width="12" height="12" viewBox="0 0 12 12"><path d="M5.75 0 V7.3 M2.9 4.5 L5.75 7.3 L8.6 4.5" fill="none" stroke="#2a4582" stroke-width="1.25"/><path d="M2.6 6.3 H0.6 V10.2 Q0.6 10.9 1.3 10.9 H10.2 Q10.9 10.9 10.9 10.2 V6.3 H8.9" fill="none" stroke="#2a4582" stroke-width="1.25" stroke-linejoin="round"/></svg>
<div class="t" style="left:1032.7px;top:485.85px;font-size:11.16px;line-height:11.16px;color:#2a4582;font-weight:700;font-style:normal;transform:scaleX(0.9928);">Startup</div>
<svg style="position:absolute;left:1088.5px;top:485px;" width="12" height="12" viewBox="0 0 12 12"><path d="M5.75 0 V7.3 M2.9 4.5 L5.75 7.3 L8.6 4.5" fill="none" stroke="#2a4582" stroke-width="1.25"/><path d="M2.6 6.3 H0.6 V10.2 Q0.6 10.9 1.3 10.9 H10.2 Q10.9 10.9 10.9 10.2 V6.3 H8.9" fill="none" stroke="#2a4582" stroke-width="1.25" stroke-linejoin="round"/></svg>
<div class="t" style="left:1110.3px;top:485.85px;font-size:11.16px;line-height:11.16px;color:#2a4582;font-weight:700;font-style:normal;transform:scaleX(0.9787);">Current</div>
<svg style="position:absolute;left:1167.7px;top:484.8px;" width="10" height="12" viewBox="0 0 10 12"><path d="M1.4 0.6 H6 L8.9 3.5 V10.6 Q8.9 11.3 8.2 11.3 H1.4 Q0.7 11.3 0.7 10.6 V1.3 Q0.7 0.6 1.4 0.6 Z" fill="none" stroke="#a3a3a3" stroke-width="1.2"/><path d="M5.8 0.6 L8.9 3.7 H5.8 Z" fill="#a3a3a3"/><path d="M4.8 4.4 V7.6 M3.2 6 H6.4 M3.2 9 H6.4" stroke="#a3a3a3" stroke-width="1"/></svg>
<div class="t" style="left:1188.7px;top:485.85px;font-size:11.16px;line-height:11.16px;color:#a3a3a3;font-weight:700;font-style:normal;transform:scaleX(0.9300);">Changes</div>
<!--site:L35:490-->
<div style="position:absolute;left:260px;top:506px;width:988px;height:32px;background:#fff"></div>
<div style="position:absolute;left:416.0px;top:506px;width:1px;height:32px;background:#d3d3d3"></div>
<div style="position:absolute;left:512.8px;top:506px;width:1px;height:32px;background:#d3d3d3"></div>
<div style="position:absolute;left:824.4px;top:506px;width:1px;height:32px;background:#d3d3d3"></div>
<div style="position:absolute;left:921.1px;top:506px;width:1px;height:32px;background:#d3d3d3"></div>
<div style="position:absolute;left:991.9px;top:506px;width:1px;height:32px;background:#d3d3d3"></div>
<div class="t" style="left:268.2px;top:516.28px;font-size:13.02px;line-height:13.02px;color:#3d5290;font-weight:400;font-style:normal;transform:scaleX(0.9251);">HWLAB-FPR-1010</div>
<div class="t" style="left:425.2px;top:516.28px;font-size:13.02px;line-height:13.02px;color:#3d5290;font-weight:400;font-style:normal;transform:scaleX(0.9247);">HWLAB</div>
<svg style="position:absolute;left:calc(428.3px + 42.81px);top:519px" width="13" height="7" viewBox="0 0 13 7"><path d="M5 0.8 H3.3 A2.7 2.7 0 0 0 3.3 6.2 H5 M8 0.8 H9.7 A2.7 2.7 0 0 1 9.7 6.2 H8 M4.2 3.5 H8.8" fill="none" stroke="#3d5290" stroke-width="1.3"/></svg>
<div class="t" style="left:522.2px;top:516.28px;font-size:13.02px;line-height:13.02px;color:#333333;font-weight:400;font-style:normal;transform:scaleX(0.9670);">2 weeks, 3 days, 23 hours</div>
<div class="t" style="left:833.2px;top:516.28px;font-size:13.02px;line-height:13.02px;color:#333333;font-weight:400;font-style:normal;transform:scaleX(0.9618);">10.64.128.44</div>
<div class="badge" style="left:926px;top:511px;height:22px;width:calc(50.30px + 7.5px);background:#fcdb8b"></div>
<div class="t" style="left:930.2px;top:516.28px;font-size:13.02px;line-height:13.02px;color:#333333;font-weight:400;font-style:normal;transform:scaleX(1.0069);">changed</div>
<svg style="position:absolute;left:1010.5px;top:517px;" width="12" height="12" viewBox="0 0 12 12"><path d="M5.75 0 V7.3 M2.9 4.5 L5.75 7.3 L8.6 4.5" fill="none" stroke="#2a4582" stroke-width="1.25"/><path d="M2.6 6.3 H0.6 V10.2 Q0.6 10.9 1.3 10.9 H10.2 Q10.9 10.9 10.9 10.2 V6.3 H8.9" fill="none" stroke="#2a4582" stroke-width="1.25" stroke-linejoin="round"/></svg>
<div class="t" style="left:1032.7px;top:517.85px;font-size:11.16px;line-height:11.16px;color:#2a4582;font-weight:700;font-style:normal;transform:scaleX(0.9928);">Startup</div>
<svg style="position:absolute;left:1088.5px;top:517px;" width="12" height="12" viewBox="0 0 12 12"><path d="M5.75 0 V7.3 M2.9 4.5 L5.75 7.3 L8.6 4.5" fill="none" stroke="#2a4582" stroke-width="1.25"/><path d="M2.6 6.3 H0.6 V10.2 Q0.6 10.9 1.3 10.9 H10.2 Q10.9 10.9 10.9 10.2 V6.3 H8.9" fill="none" stroke="#2a4582" stroke-width="1.25" stroke-linejoin="round"/></svg>
<div class="t" style="left:1110.3px;top:517.85px;font-size:11.16px;line-height:11.16px;color:#2a4582;font-weight:700;font-style:normal;transform:scaleX(0.9787);">Current</div>
<svg style="position:absolute;left:1167.7px;top:516.8px;" width="10" height="12" viewBox="0 0 10 12"><path d="M1.4 0.6 H6 L8.9 3.5 V10.6 Q8.9 11.3 8.2 11.3 H1.4 Q0.7 11.3 0.7 10.6 V1.3 Q0.7 0.6 1.4 0.6 Z" fill="none" stroke="#2a4582" stroke-width="1.2"/><path d="M5.8 0.6 L8.9 3.7 H5.8 Z" fill="#2a4582"/><path d="M4.8 4.4 V7.6 M3.2 6 H6.4 M3.2 9 H6.4" stroke="#2a4582" stroke-width="1"/></svg>
<div class="t" style="left:1188.7px;top:517.85px;font-size:11.16px;line-height:11.16px;color:#2a4582;font-weight:700;font-style:normal;transform:scaleX(0.9300);">Changes</div>
<!--site:HWLAB:522-->
<div style="position:absolute;left:260px;top:538px;width:988px;height:32px;background:#f5f5f5"></div>
<div style="position:absolute;left:416.0px;top:538px;width:1px;height:32px;background:#d3d3d3"></div>
<div style="position:absolute;left:512.8px;top:538px;width:1px;height:32px;background:#d3d3d3"></div>
<div style="position:absolute;left:824.4px;top:538px;width:1px;height:32px;background:#d3d3d3"></div>
<div style="position:absolute;left:921.1px;top:538px;width:1px;height:32px;background:#d3d3d3"></div>
<div style="position:absolute;left:991.9px;top:538px;width:1px;height:32px;background:#d3d3d3"></div>
<div class="t" style="left:268.2px;top:548.28px;font-size:13.02px;line-height:13.02px;color:#3d5290;font-weight:400;font-style:normal;transform:scaleX(0.9229);">L43AC21</div>
<div class="t" style="left:425.2px;top:548.28px;font-size:13.02px;line-height:13.02px;color:#3d5290;font-weight:400;font-style:normal;transform:scaleX(0.9547);">L43</div>
<svg style="position:absolute;left:calc(428.3px + 20.73px);top:551px" width="13" height="7" viewBox="0 0 13 7"><path d="M5 0.8 H3.3 A2.7 2.7 0 0 0 3.3 6.2 H5 M8 0.8 H9.7 A2.7 2.7 0 0 1 9.7 6.2 H8 M4.2 3.5 H8.8" fill="none" stroke="#3d5290" stroke-width="1.3"/></svg>
<div class="t" style="left:522.2px;top:548.28px;font-size:13.02px;line-height:13.02px;color:#333333;font-weight:400;font-style:normal;transform:scaleX(0.9822);">3 days, 22 hours, 21 minutes</div>
<div class="t" style="left:833.2px;top:548.28px;font-size:13.02px;line-height:13.02px;color:#333333;font-weight:400;font-style:normal;transform:scaleX(0.9615);">10.43.129.186</div>
<div class="badge" style="left:926px;top:543px;height:22px;width:calc(34.12px + 7.5px);background:#86dcb4"></div>
<div class="t" style="left:930.2px;top:548.28px;font-size:13.02px;line-height:13.02px;color:#333333;font-weight:400;font-style:normal;transform:scaleX(0.9825);">saved</div>
<svg style="position:absolute;left:1010.5px;top:549px;" width="12" height="12" viewBox="0 0 12 12"><path d="M5.75 0 V7.3 M2.9 4.5 L5.75 7.3 L8.6 4.5" fill="none" stroke="#2a4582" stroke-width="1.25"/><path d="M2.6 6.3 H0.6 V10.2 Q0.6 10.9 1.3 10.9 H10.2 Q10.9 10.9 10.9 10.2 V6.3 H8.9" fill="none" stroke="#2a4582" stroke-width="1.25" stroke-linejoin="round"/></svg>
<div class="t" style="left:1032.7px;top:549.85px;font-size:11.16px;line-height:11.16px;color:#2a4582;font-weight:700;font-style:normal;transform:scaleX(0.9928);">Startup</div>
<svg style="position:absolute;left:1088.5px;top:549px;" width="12" height="12" viewBox="0 0 12 12"><path d="M5.75 0 V7.3 M2.9 4.5 L5.75 7.3 L8.6 4.5" fill="none" stroke="#2a4582" stroke-width="1.25"/><path d="M2.6 6.3 H0.6 V10.2 Q0.6 10.9 1.3 10.9 H10.2 Q10.9 10.9 10.9 10.2 V6.3 H8.9" fill="none" stroke="#2a4582" stroke-width="1.25" stroke-linejoin="round"/></svg>
<div class="t" style="left:1110.3px;top:549.85px;font-size:11.16px;line-height:11.16px;color:#2a4582;font-weight:700;font-style:normal;transform:scaleX(0.9787);">Current</div>
<svg style="position:absolute;left:1167.7px;top:548.8px;" width="10" height="12" viewBox="0 0 10 12"><path d="M1.4 0.6 H6 L8.9 3.5 V10.6 Q8.9 11.3 8.2 11.3 H1.4 Q0.7 11.3 0.7 10.6 V1.3 Q0.7 0.6 1.4 0.6 Z" fill="none" stroke="#a3a3a3" stroke-width="1.2"/><path d="M5.8 0.6 L8.9 3.7 H5.8 Z" fill="#a3a3a3"/><path d="M4.8 4.4 V7.6 M3.2 6 H6.4 M3.2 9 H6.4" stroke="#a3a3a3" stroke-width="1"/></svg>
<div class="t" style="left:1188.7px;top:549.85px;font-size:11.16px;line-height:11.16px;color:#a3a3a3;font-weight:700;font-style:normal;transform:scaleX(0.9300);">Changes</div>
<!--site:L43:554-->
<div style="position:absolute;left:260px;top:570px;width:988px;height:32px;background:#fff"></div>
<div style="position:absolute;left:416.0px;top:570px;width:1px;height:32px;background:#d3d3d3"></div>
<div style="position:absolute;left:512.8px;top:570px;width:1px;height:32px;background:#d3d3d3"></div>
<div style="position:absolute;left:824.4px;top:570px;width:1px;height:32px;background:#d3d3d3"></div>
<div style="position:absolute;left:921.1px;top:570px;width:1px;height:32px;background:#d3d3d3"></div>
<div style="position:absolute;left:991.9px;top:570px;width:1px;height:32px;background:#d3d3d3"></div>
<div class="t" style="left:268.2px;top:580.28px;font-size:13.02px;line-height:13.02px;color:#3d5290;font-weight:400;font-style:normal;transform:scaleX(0.9229);">L36AC53</div>
<div class="t" style="left:425.2px;top:580.28px;font-size:13.02px;line-height:13.02px;color:#3d5290;font-weight:400;font-style:normal;transform:scaleX(0.9547);">L36</div>
<svg style="position:absolute;left:calc(428.3px + 20.73px);top:583px" width="13" height="7" viewBox="0 0 13 7"><path d="M5 0.8 H3.3 A2.7 2.7 0 0 0 3.3 6.2 H5 M8 0.8 H9.7 A2.7 2.7 0 0 1 9.7 6.2 H8 M4.2 3.5 H8.8" fill="none" stroke="#3d5290" stroke-width="1.3"/></svg>
<div class="t" style="left:522.2px;top:580.28px;font-size:13.02px;line-height:13.02px;color:#333333;font-weight:400;font-style:normal;transform:scaleX(0.9822);">3 days, 22 hours, 23 minutes</div>
<div class="t" style="left:833.2px;top:580.28px;font-size:13.02px;line-height:13.02px;color:#333333;font-weight:400;font-style:normal;transform:scaleX(0.9615);">10.36.159.106</div>
<div class="badge" style="left:926px;top:575px;height:22px;width:calc(34.12px + 7.5px);background:#86dcb4"></div>
<div class="t" style="left:930.2px;top:580.28px;font-size:13.02px;line-height:13.02px;color:#333333;font-weight:400;font-style:normal;transform:scaleX(0.9825);">saved</div>
<svg style="position:absolute;left:1010.5px;top:581px;" width="12" height="12" viewBox="0 0 12 12"><path d="M5.75 0 V7.3 M2.9 4.5 L5.75 7.3 L8.6 4.5" fill="none" stroke="#2a4582" stroke-width="1.25"/><path d="M2.6 6.3 H0.6 V10.2 Q0.6 10.9 1.3 10.9 H10.2 Q10.9 10.9 10.9 10.2 V6.3 H8.9" fill="none" stroke="#2a4582" stroke-width="1.25" stroke-linejoin="round"/></svg>
<div class="t" style="left:1032.7px;top:581.85px;font-size:11.16px;line-height:11.16px;color:#2a4582;font-weight:700;font-style:normal;transform:scaleX(0.9928);">Startup</div>
<svg style="position:absolute;left:1088.5px;top:581px;" width="12" height="12" viewBox="0 0 12 12"><path d="M5.75 0 V7.3 M2.9 4.5 L5.75 7.3 L8.6 4.5" fill="none" stroke="#2a4582" stroke-width="1.25"/><path d="M2.6 6.3 H0.6 V10.2 Q0.6 10.9 1.3 10.9 H10.2 Q10.9 10.9 10.9 10.2 V6.3 H8.9" fill="none" stroke="#2a4582" stroke-width="1.25" stroke-linejoin="round"/></svg>
<div class="t" style="left:1110.3px;top:581.85px;font-size:11.16px;line-height:11.16px;color:#2a4582;font-weight:700;font-style:normal;transform:scaleX(0.9787);">Current</div>
<svg style="position:absolute;left:1167.7px;top:580.8px;" width="10" height="12" viewBox="0 0 10 12"><path d="M1.4 0.6 H6 L8.9 3.5 V10.6 Q8.9 11.3 8.2 11.3 H1.4 Q0.7 11.3 0.7 10.6 V1.3 Q0.7 0.6 1.4 0.6 Z" fill="none" stroke="#a3a3a3" stroke-width="1.2"/><path d="M5.8 0.6 L8.9 3.7 H5.8 Z" fill="#a3a3a3"/><path d="M4.8 4.4 V7.6 M3.2 6 H6.4 M3.2 9 H6.4" stroke="#a3a3a3" stroke-width="1"/></svg>
<div class="t" style="left:1188.7px;top:581.85px;font-size:11.16px;line-height:11.16px;color:#a3a3a3;font-weight:700;font-style:normal;transform:scaleX(0.9300);">Changes</div>
<!--site:L36:586-->
<div style="position:absolute;left:260px;top:602px;width:988px;height:32px;background:#f5f5f5"></div>
<div style="position:absolute;left:416.0px;top:602px;width:1px;height:32px;background:#d3d3d3"></div>
<div style="position:absolute;left:512.8px;top:602px;width:1px;height:32px;background:#d3d3d3"></div>
<div style="position:absolute;left:824.4px;top:602px;width:1px;height:32px;background:#d3d3d3"></div>
<div style="position:absolute;left:921.1px;top:602px;width:1px;height:32px;background:#d3d3d3"></div>
<div style="position:absolute;left:991.9px;top:602px;width:1px;height:32px;background:#d3d3d3"></div>
<div class="t" style="left:268.2px;top:612.28px;font-size:13.02px;line-height:13.02px;color:#3d5290;font-weight:400;font-style:normal;transform:scaleX(0.9229);">L43AC24</div>
<div class="t" style="left:425.2px;top:612.28px;font-size:13.02px;line-height:13.02px;color:#3d5290;font-weight:400;font-style:normal;transform:scaleX(0.9547);">L43</div>
<svg style="position:absolute;left:calc(428.3px + 20.73px);top:615px" width="13" height="7" viewBox="0 0 13 7"><path d="M5 0.8 H3.3 A2.7 2.7 0 0 0 3.3 6.2 H5 M8 0.8 H9.7 A2.7 2.7 0 0 1 9.7 6.2 H8 M4.2 3.5 H8.8" fill="none" stroke="#3d5290" stroke-width="1.3"/></svg>
<div class="t" style="left:522.2px;top:612.28px;font-size:13.02px;line-height:13.02px;color:#333333;font-weight:400;font-style:normal;transform:scaleX(0.9822);">3 days, 22 hours, 19 minutes</div>
<div class="t" style="left:833.2px;top:612.28px;font-size:13.02px;line-height:13.02px;color:#333333;font-weight:400;font-style:normal;transform:scaleX(0.9615);">10.43.129.189</div>
<div class="badge" style="left:926px;top:607px;height:22px;width:calc(34.12px + 7.5px);background:#86dcb4"></div>
<div class="t" style="left:930.2px;top:612.28px;font-size:13.02px;line-height:13.02px;color:#333333;font-weight:400;font-style:normal;transform:scaleX(0.9825);">saved</div>
<svg style="position:absolute;left:1010.5px;top:613px;" width="12" height="12" viewBox="0 0 12 12"><path d="M5.75 0 V7.3 M2.9 4.5 L5.75 7.3 L8.6 4.5" fill="none" stroke="#2a4582" stroke-width="1.25"/><path d="M2.6 6.3 H0.6 V10.2 Q0.6 10.9 1.3 10.9 H10.2 Q10.9 10.9 10.9 10.2 V6.3 H8.9" fill="none" stroke="#2a4582" stroke-width="1.25" stroke-linejoin="round"/></svg>
<div class="t" style="left:1032.7px;top:613.85px;font-size:11.16px;line-height:11.16px;color:#2a4582;font-weight:700;font-style:normal;transform:scaleX(0.9928);">Startup</div>
<svg style="position:absolute;left:1088.5px;top:613px;" width="12" height="12" viewBox="0 0 12 12"><path d="M5.75 0 V7.3 M2.9 4.5 L5.75 7.3 L8.6 4.5" fill="none" stroke="#2a4582" stroke-width="1.25"/><path d="M2.6 6.3 H0.6 V10.2 Q0.6 10.9 1.3 10.9 H10.2 Q10.9 10.9 10.9 10.2 V6.3 H8.9" fill="none" stroke="#2a4582" stroke-width="1.25" stroke-linejoin="round"/></svg>
<div class="t" style="left:1110.3px;top:613.85px;font-size:11.16px;line-height:11.16px;color:#2a4582;font-weight:700;font-style:normal;transform:scaleX(0.9787);">Current</div>
<svg style="position:absolute;left:1167.7px;top:612.8px;" width="10" height="12" viewBox="0 0 10 12"><path d="M1.4 0.6 H6 L8.9 3.5 V10.6 Q8.9 11.3 8.2 11.3 H1.4 Q0.7 11.3 0.7 10.6 V1.3 Q0.7 0.6 1.4 0.6 Z" fill="none" stroke="#a3a3a3" stroke-width="1.2"/><path d="M5.8 0.6 L8.9 3.7 H5.8 Z" fill="#a3a3a3"/><path d="M4.8 4.4 V7.6 M3.2 6 H6.4 M3.2 9 H6.4" stroke="#a3a3a3" stroke-width="1"/></svg>
<div class="t" style="left:1188.7px;top:613.85px;font-size:11.16px;line-height:11.16px;color:#a3a3a3;font-weight:700;font-style:normal;transform:scaleX(0.9300);">Changes</div>
<!--site:L43:618-->
<div style="position:absolute;left:260px;top:634px;width:988px;height:32px;background:#fff"></div>
<div style="position:absolute;left:416.0px;top:634px;width:1px;height:32px;background:#d3d3d3"></div>
<div style="position:absolute;left:512.8px;top:634px;width:1px;height:32px;background:#d3d3d3"></div>
<div style="position:absolute;left:824.4px;top:634px;width:1px;height:32px;background:#d3d3d3"></div>
<div style="position:absolute;left:921.1px;top:634px;width:1px;height:32px;background:#d3d3d3"></div>
<div style="position:absolute;left:991.9px;top:634px;width:1px;height:32px;background:#d3d3d3"></div>
<div class="t" style="left:268.2px;top:644.28px;font-size:13.02px;line-height:13.02px;color:#3d5290;font-weight:400;font-style:normal;transform:scaleX(0.9229);">L45AC38</div>
<div class="t" style="left:425.2px;top:644.28px;font-size:13.02px;line-height:13.02px;color:#3d5290;font-weight:400;font-style:normal;transform:scaleX(0.9547);">L45</div>
<svg style="position:absolute;left:calc(428.3px + 20.73px);top:647px" width="13" height="7" viewBox="0 0 13 7"><path d="M5 0.8 H3.3 A2.7 2.7 0 0 0 3.3 6.2 H5 M8 0.8 H9.7 A2.7 2.7 0 0 1 9.7 6.2 H8 M4.2 3.5 H8.8" fill="none" stroke="#3d5290" stroke-width="1.3"/></svg>
<div class="t" style="left:522.2px;top:644.28px;font-size:13.02px;line-height:13.02px;color:#333333;font-weight:400;font-style:normal;transform:scaleX(0.9822);">3 days, 22 hours, 20 minutes</div>
<div class="t" style="left:833.2px;top:644.28px;font-size:13.02px;line-height:13.02px;color:#333333;font-weight:400;font-style:normal;transform:scaleX(0.9728);">10.45.119.138</div>
<div class="badge" style="left:926px;top:639px;height:22px;width:calc(34.12px + 7.5px);background:#86dcb4"></div>
<div class="t" style="left:930.2px;top:644.28px;font-size:13.02px;line-height:13.02px;color:#333333;font-weight:400;font-style:normal;transform:scaleX(0.9825);">saved</div>
<svg style="position:absolute;left:1010.5px;top:645px;" width="12" height="12" viewBox="0 0 12 12"><path d="M5.75 0 V7.3 M2.9 4.5 L5.75 7.3 L8.6 4.5" fill="none" stroke="#2a4582" stroke-width="1.25"/><path d="M2.6 6.3 H0.6 V10.2 Q0.6 10.9 1.3 10.9 H10.2 Q10.9 10.9 10.9 10.2 V6.3 H8.9" fill="none" stroke="#2a4582" stroke-width="1.25" stroke-linejoin="round"/></svg>
<div class="t" style="left:1032.7px;top:645.85px;font-size:11.16px;line-height:11.16px;color:#2a4582;font-weight:700;font-style:normal;transform:scaleX(0.9928);">Startup</div>
<svg style="position:absolute;left:1088.5px;top:645px;" width="12" height="12" viewBox="0 0 12 12"><path d="M5.75 0 V7.3 M2.9 4.5 L5.75 7.3 L8.6 4.5" fill="none" stroke="#2a4582" stroke-width="1.25"/><path d="M2.6 6.3 H0.6 V10.2 Q0.6 10.9 1.3 10.9 H10.2 Q10.9 10.9 10.9 10.2 V6.3 H8.9" fill="none" stroke="#2a4582" stroke-width="1.25" stroke-linejoin="round"/></svg>
<div class="t" style="left:1110.3px;top:645.85px;font-size:11.16px;line-height:11.16px;color:#2a4582;font-weight:700;font-style:normal;transform:scaleX(0.9787);">Current</div>
<svg style="position:absolute;left:1167.7px;top:644.8px;" width="10" height="12" viewBox="0 0 10 12"><path d="M1.4 0.6 H6 L8.9 3.5 V10.6 Q8.9 11.3 8.2 11.3 H1.4 Q0.7 11.3 0.7 10.6 V1.3 Q0.7 0.6 1.4 0.6 Z" fill="none" stroke="#a3a3a3" stroke-width="1.2"/><path d="M5.8 0.6 L8.9 3.7 H5.8 Z" fill="#a3a3a3"/><path d="M4.8 4.4 V7.6 M3.2 6 H6.4 M3.2 9 H6.4" stroke="#a3a3a3" stroke-width="1"/></svg>
<div class="t" style="left:1188.7px;top:645.85px;font-size:11.16px;line-height:11.16px;color:#a3a3a3;font-weight:700;font-style:normal;transform:scaleX(0.9300);">Changes</div>
<!--site:L45:650-->
</div>
</body></html>
